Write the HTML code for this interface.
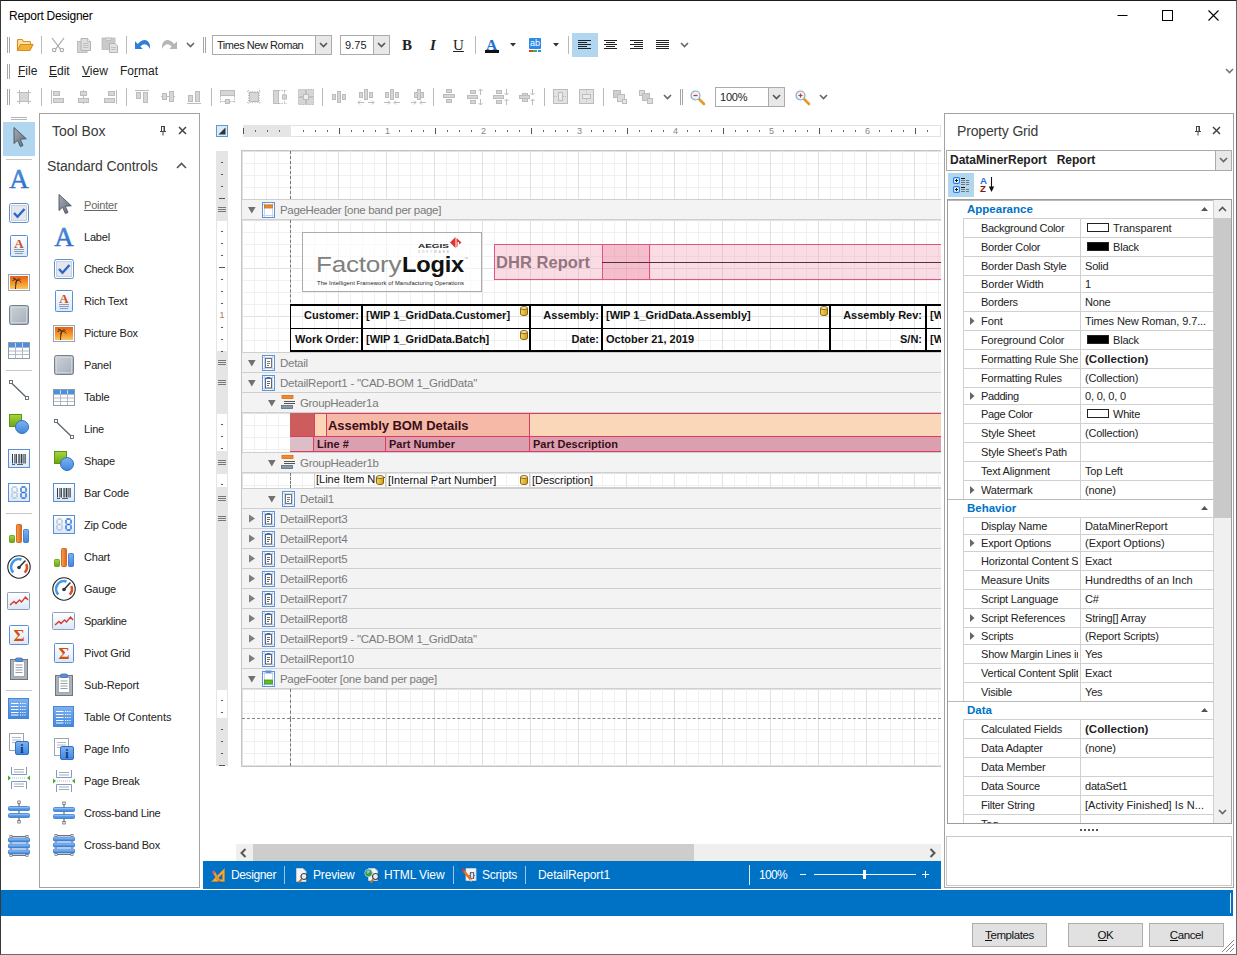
<!DOCTYPE html>
<html><head><meta charset="utf-8"><title>Report Designer</title>
<style>
html,body{margin:0;padding:0;}
body{width:1237px;height:955px;position:relative;overflow:hidden;background:#fff;font-family:"Liberation Sans",sans-serif;font-size:11px;color:#222;}
div,svg,span.a{position:absolute;box-sizing:border-box;white-space:nowrap;}
svg{overflow:visible;}
.bh{background:#f3f3f3;border-top:1px solid #cfcfcf;}
.bt{color:#7a7a7a;}
u{text-decoration:underline;}
.serif{font-family:"Liberation Serif",serif;}
</style></head><body>
<div style="left:0px;top:0px;width:1237px;height:955px;border:1px solid #6b6b6b;border-top-color:#1c1c1c;border-left-color:#3a3a3a;"></div>
<div style="left:9px;top:7px;height:18px;line-height:18px;font-size:12px;color:#000;letter-spacing:-0.258px;">Report Designer</div>
<svg style="left:1117px;top:10px;" width="11" height="11" viewBox="0 0 11 11"><path d="M0.5 5.5H10.5" stroke="#000" stroke-width="1" fill="none"/></svg>
<svg style="left:1162px;top:10px;" width="11" height="11" viewBox="0 0 11 11"><rect x="0.5" y="0.5" width="10" height="10" stroke="#000" stroke-width="1" fill="none"/></svg>
<svg style="left:1208px;top:10px;" width="11" height="11" viewBox="0 0 11 11"><path d="M0.5 0.5L10.5 10.5M10.5 0.5L0.5 10.5" stroke="#000" stroke-width="1.1" fill="none"/></svg>
<div style="left:7px;top:37px;width:1px;height:16px;background:#a5a5a5;"></div>
<div style="left:9px;top:37px;width:1px;height:16px;background:#a5a5a5;"></div>
<svg style="left:16px;top:37px;" width="18" height="16" viewBox="0 0 18 16"><path d="M1.5 13.5V3.5Q1.5 2.5 2.5 2.5H6l1.5 2H13.5Q14.5 4.5 14.5 5.5V7" fill="#fbe3a8" stroke="#d8901c" stroke-width="1.2"/><path d="M1.5 13.5L4.5 7.5H17L13.8 13.5Z" fill="#f3b13a" stroke="#d8901c" stroke-width="1.2" stroke-linejoin="round"/></svg>
<div style="left:41px;top:36px;width:1px;height:18px;background:#b9b9b9;"></div>
<svg style="left:51px;top:37px;" width="14" height="16" viewBox="0 0 14 16"><path d="M1 1L9.300 12M13 1L4.700 12" stroke="#a6a6a6" stroke-width="1.200" fill="none"/><circle cx="3.200" cy="13" r="1.700" fill="#fff" stroke="#a6a6a6" stroke-width="1.100"/><circle cx="10.800" cy="13" r="1.700" fill="#fff" stroke="#a6a6a6" stroke-width="1.100"/></svg>
<svg style="left:76px;top:37px;" width="16" height="16" viewBox="0 0 16 16"><rect x="1.500" y="4.500" width="9.500" height="11" fill="#d4d4d4" stroke="#bdbdbd"/><path d="M5 1.500H11.500L14.500 4.500V13.500H5Z" fill="#dedede" stroke="#b3b3b3"/><path d="M11.500 1.500V4.500H14.500" fill="#eee" stroke="#b3b3b3" stroke-width="0.800"/><path d="M7 6.500H12.500M7 8.500H12.500M7 10.500H12.500" stroke="#bcbcbc" stroke-width="0.900"/></svg>
<svg style="left:101px;top:37px;" width="18" height="16" viewBox="0 0 18 16"><rect x="1" y="1" width="13" height="11.500" fill="#c9c9c9" stroke="#bcbcbc" stroke-width="0.800"/><path d="M4.500 1H10.500V2.500Q10.500 3.500 9.500 3.500H5.500Q4.500 3.500 4.500 2.500Z" fill="#dcdcdc" stroke="#b5b5b5" stroke-width="0.700"/><path d="M8.500 6.500H14L16.500 9V15.500H8.500Z" fill="#e2e2e2" stroke="#b3b3b3"/><path d="M10 10.500H15M10 12.500H15" stroke="#bcbcbc" stroke-width="0.900"/></svg>
<div style="left:126px;top:36px;width:1px;height:18px;background:#b9b9b9;"></div>
<svg style="left:134px;top:38px;" width="18" height="14" viewBox="0 0 18 14"><path d="M1 3.200V11H8.800L6.300 8.600Q9.500 5.400 12.500 6.800Q15 8.200 15.800 11Q16.800 5.500 13.500 3Q9 0.200 3.800 6Z" fill="#2f7fd6"/></svg>
<svg style="left:160px;top:38px;" width="18" height="14" viewBox="0 0 18 14"><path d="M17 3.200V11H9.200L11.700 8.600Q8.500 5.400 5.500 6.800Q3 8.200 2.200 11Q1.200 5.500 4.500 3Q9 0.200 14.200 6Z" fill="#b5b5b5"/></svg>
<svg style="left:186px;top:42px;" width="9" height="6" viewBox="0 0 9 6"><path d="M1 1L4.5 4.5L8 1" stroke="#666" stroke-width="1.6" fill="none"/></svg>
<div style="left:203px;top:37px;width:1px;height:16px;background:#a5a5a5;"></div>
<div style="left:205px;top:37px;width:1px;height:16px;background:#a5a5a5;"></div>
<div style="left:212px;top:35px;width:120px;height:20px;border:1px solid #ababab;background:#fff;"></div>
<div style="left:315px;top:35px;width:17px;height:20px;border:1px solid #ababab;background:#e8e8e8;"></div>
<svg style="left:319px;top:42px;" width="9" height="6" viewBox="0 0 9 6"><path d="M1 1L4.5 4.5L8 1" stroke="#555" stroke-width="1.6" fill="none"/></svg>
<div style="left:217px;top:36px;height:18px;line-height:18px;font-size:11px;color:#222;letter-spacing:-0.461px;">Times New Roman</div>
<div style="left:340px;top:35px;width:50px;height:20px;border:1px solid #ababab;background:#fff;"></div>
<div style="left:373px;top:35px;width:17px;height:20px;border:1px solid #ababab;background:#e8e8e8;"></div>
<svg style="left:377px;top:42px;" width="9" height="6" viewBox="0 0 9 6"><path d="M1 1L4.5 4.5L8 1" stroke="#555" stroke-width="1.6" fill="none"/></svg>
<div style="left:345px;top:36px;height:18px;line-height:18px;font-size:11px;color:#222;letter-spacing:0.098px;">9.75</div>
<div class="serif" style="left:402px;top:35px;height:20px;line-height:20px;font-size:15px;font-weight:bold;color:#222;">B</div>
<div class="serif" style="left:430px;top:35px;height:20px;line-height:20px;font-size:15px;font-style:italic;font-weight:bold;color:#222;">I</div>
<div class="serif" style="left:453px;top:35px;height:20px;line-height:20px;font-size:15px;text-decoration:underline;color:#222;">U</div>
<div style="left:475px;top:36px;width:1px;height:18px;background:#b9b9b9;"></div>
<div class="serif" style="left:486px;top:35px;height:20px;line-height:20px;font-size:15.5px;color:#1f6fd8;font-weight:bold;">A</div>
<div style="left:485px;top:50px;width:14px;height:3px;background:#111;"></div>
<svg style="left:510px;top:43px;" width="7" height="4" viewBox="0 0 7 4"><path d="M0 0H6L3 3.500Z" fill="#333"/></svg>
<div style="left:529px;top:38px;width:12px;height:11px;background:#2b8be6;border-radius:1px;"></div>
<div style="left:530px;top:38px;height:11px;line-height:11px;font-size:9px;color:#fff;">ab</div>
<div style="left:529px;top:50px;width:3.5px;height:2px;background:#e03c31;"></div>
<div style="left:533.3px;top:50px;width:3.5px;height:2px;background:#3db54a;"></div>
<div style="left:537.8px;top:50px;width:3.2px;height:2px;background:#2b8be6;"></div>
<svg style="left:553px;top:43px;" width="7" height="4" viewBox="0 0 7 4"><path d="M0 0H6L3 3.500Z" fill="#333"/></svg>
<div style="left:568px;top:36px;width:1px;height:18px;background:#b9b9b9;"></div>
<div style="left:572px;top:33px;width:26px;height:24px;background:#b1d6f0;"></div>
<svg style="left:578px;top:40px;" width="14" height="10" viewBox="0 0 14 10"><rect x="0" y="0" width="13" height="1" fill="#222"/><rect x="0" y="2" width="9" height="1" fill="#222"/><rect x="0" y="4" width="13" height="1" fill="#222"/><rect x="0" y="6" width="9" height="1" fill="#222"/><rect x="0" y="8" width="13" height="1" fill="#222"/></svg>
<svg style="left:604px;top:40px;" width="14" height="10" viewBox="0 0 14 10"><rect x="0" y="0" width="13" height="1" fill="#222"/><rect x="2" y="2" width="9" height="1" fill="#222"/><rect x="0" y="4" width="13" height="1" fill="#222"/><rect x="2" y="6" width="9" height="1" fill="#222"/><rect x="0" y="8" width="13" height="1" fill="#222"/></svg>
<svg style="left:630px;top:40px;" width="14" height="10" viewBox="0 0 14 10"><rect x="0" y="0" width="13" height="1" fill="#222"/><rect x="4" y="2" width="9" height="1" fill="#222"/><rect x="0" y="4" width="13" height="1" fill="#222"/><rect x="4" y="6" width="9" height="1" fill="#222"/><rect x="0" y="8" width="13" height="1" fill="#222"/></svg>
<svg style="left:656px;top:40px;" width="14" height="10" viewBox="0 0 14 10"><rect x="0" y="0" width="13" height="1" fill="#222"/><rect x="0" y="2" width="13" height="1" fill="#222"/><rect x="0" y="4" width="13" height="1" fill="#222"/><rect x="0" y="6" width="13" height="1" fill="#222"/><rect x="0" y="8" width="13" height="1" fill="#222"/></svg>
<svg style="left:680px;top:42px;" width="9" height="6" viewBox="0 0 9 6"><path d="M1 1L4.5 4.5L8 1" stroke="#666" stroke-width="1.6" fill="none"/></svg>
<div style="left:7px;top:64px;width:1px;height:15px;background:#a5a5a5;"></div>
<div style="left:9px;top:64px;width:1px;height:15px;background:#a5a5a5;"></div>
<div style="left:18px;top:62px;height:18px;line-height:18px;font-size:12px;color:#222;">File</div>
<div style="left:17.5px;top:76px;width:7.8296875px;height:1px;background:#222;"></div>
<div style="left:49px;top:62px;height:18px;line-height:18px;font-size:12px;color:#222;">Edit</div>
<div style="left:48.5px;top:76px;width:8.5046875px;height:1px;background:#222;"></div>
<div style="left:82px;top:62px;height:18px;line-height:18px;font-size:12px;color:#222;">View</div>
<div style="left:81.5px;top:76px;width:8.5046875px;height:1px;background:#222;"></div>
<div style="left:120px;top:62px;height:18px;line-height:18px;font-size:12px;color:#222;">Format</div>
<div style="left:133.503125px;top:76px;width:4.496875px;height:1px;background:#222;"></div>
<svg style="left:1225px;top:68px;" width="9" height="6" viewBox="0 0 9 6"><path d="M1 1L4.5 4.5L8 1" stroke="#777" stroke-width="1.6" fill="none"/></svg>
<div style="left:7px;top:89px;width:1px;height:16px;background:#a5a5a5;"></div>
<div style="left:9px;top:89px;width:1px;height:16px;background:#a5a5a5;"></div>
<svg style="left:16px;top:89px;" width="16" height="16" viewBox="0 0 16 16"><rect x="3.5" y="3.5" width="9" height="9" fill="#d6d6d6" stroke="#bcbcbc"/><path d="M1 3.5H15M1 12.500H15M3.500 1V15M12.500 1V15" stroke="#bcbcbc" stroke-width="1"/></svg>
<div style="left:41px;top:88px;width:1px;height:18px;background:#b9b9b9;"></div>
<svg style="left:50px;top:89px;" width="16" height="16" viewBox="0 0 16 16"><path d="M1.5 1V15" stroke="#bcbcbc"/><rect x="3.5" y="2.5" width="6" height="4" fill="#d6d6d6" stroke="#bcbcbc"/><rect x="3.5" y="9.500" width="10" height="4" fill="#d6d6d6" stroke="#bcbcbc"/></svg>
<svg style="left:76px;top:89px;" width="16" height="16" viewBox="0 0 16 16"><path d="M7.500 1V15" stroke="#bcbcbc"/><rect x="4.5" y="2.5" width="6" height="4" fill="#d6d6d6" stroke="#bcbcbc"/><rect x="2.5" y="9.500" width="10" height="4" fill="#d6d6d6" stroke="#bcbcbc"/></svg>
<svg style="left:102px;top:89px;" width="16" height="16" viewBox="0 0 16 16"><path d="M14.500 1V15" stroke="#bcbcbc"/><rect x="6.500" y="2.5" width="6" height="4" fill="#d6d6d6" stroke="#bcbcbc"/><rect x="2.5" y="9.500" width="10" height="4" fill="#d6d6d6" stroke="#bcbcbc"/></svg>
<div style="left:126px;top:88px;width:1px;height:18px;background:#b9b9b9;"></div>
<svg style="left:134px;top:89px;" width="16" height="16" viewBox="0 0 16 16"><path d="M1 1.500H15" stroke="#bcbcbc"/><rect x="2.5" y="3.5" width="4" height="6" fill="#d6d6d6" stroke="#bcbcbc"/><rect x="9.500" y="3.5" width="4" height="10" fill="#d6d6d6" stroke="#bcbcbc"/></svg>
<svg style="left:160px;top:89px;" width="16" height="16" viewBox="0 0 16 16"><path d="M1 7.500H15" stroke="#bcbcbc"/><rect x="2.5" y="4.5" width="4" height="6" fill="#d6d6d6" stroke="#bcbcbc"/><rect x="9.500" y="2.5" width="4" height="10" fill="#d6d6d6" stroke="#bcbcbc"/></svg>
<svg style="left:186px;top:89px;" width="16" height="16" viewBox="0 0 16 16"><path d="M1 14.500H15" stroke="#bcbcbc"/><rect x="2.5" y="6.500" width="4" height="6" fill="#d6d6d6" stroke="#bcbcbc"/><rect x="9.500" y="2.5" width="4" height="10" fill="#d6d6d6" stroke="#bcbcbc"/></svg>
<div style="left:211px;top:88px;width:1px;height:18px;background:#b9b9b9;"></div>
<svg style="left:220px;top:89px;" width="16" height="16" viewBox="0 0 16 16"><rect x="0.5" y="1.500" width="14" height="5" fill="#d6d6d6" stroke="#bcbcbc"/><rect x="5.500" y="10.500" width="4" height="4" fill="#d6d6d6" stroke="#bcbcbc"/><path d="M0.500 7V14M14.500 7V14M1 12.500H5M10 12.500H14" stroke="#bcbcbc" stroke-dasharray="1.500 1"/></svg>
<svg style="left:246px;top:89px;" width="16" height="16" viewBox="0 0 16 16"><rect x="3.5" y="3.5" width="9" height="9" fill="#d6d6d6" stroke="#bcbcbc"/><path d="M1 2.500H15M1 13.500H15M2.500 1V15M13.500 1V15" stroke="#bcbcbc" stroke-dasharray="1 1.500"/></svg>
<svg style="left:272px;top:89px;" width="16" height="16" viewBox="0 0 16 16"><rect x="1.500" y="1.500" width="5" height="13" fill="#d6d6d6" stroke="#bcbcbc"/><path d="M7 1.500H15M7 14.500H15M12.500 2V14" stroke="#bcbcbc" stroke-dasharray="1.500 1"/><rect x="10.500" y="6" width="4" height="4" fill="#d6d6d6" stroke="#bcbcbc"/></svg>
<svg style="left:298px;top:89px;" width="16" height="16" viewBox="0 0 16 16"><rect x="0.5" y="0.5" width="15" height="15" fill="#d6d6d6" stroke="#bcbcbc" stroke-dasharray="2 1"/><rect x="5.500" y="5.500" width="5" height="5" fill="#eee" stroke="#bcbcbc"/><path d="M8 1V5M8 11V15M1 8H5M11 8H15" stroke="#aaa"/></svg>
<div style="left:322px;top:88px;width:1px;height:18px;background:#b9b9b9;"></div>
<svg style="left:332px;top:89px;" width="16" height="16" viewBox="0 0 16 16"><rect x="0.5" y="5.500" width="3" height="5" fill="#d6d6d6" stroke="#bcbcbc"/><rect x="5.500" y="2.5" width="3" height="11" fill="#d6d6d6" stroke="#bcbcbc"/><rect x="10.500" y="5.500" width="3" height="5" fill="#d6d6d6" stroke="#bcbcbc"/></svg>
<svg style="left:358px;top:89px;" width="16" height="16" viewBox="0 0 16 16"><rect x="1.500" y="3.5" width="3" height="5" fill="#d6d6d6" stroke="#bcbcbc"/><rect x="6.500" y="0.5" width="3" height="10" fill="#d6d6d6" stroke="#bcbcbc"/><rect x="11.500" y="3.5" width="3" height="5" fill="#d6d6d6" stroke="#bcbcbc"/><path d="M0 13.500H6M10 13.500H16M2 11.500L0 13.500L2 15.500M14 11.500L16 13.500L14 15.500" stroke="#bcbcbc" fill="none"/></svg>
<svg style="left:384px;top:89px;" width="16" height="16" viewBox="0 0 16 16"><rect x="1.500" y="3.5" width="3" height="5" fill="#d6d6d6" stroke="#bcbcbc"/><rect x="6.500" y="0.5" width="3" height="10" fill="#d6d6d6" stroke="#bcbcbc"/><rect x="11.500" y="3.5" width="3" height="5" fill="#d6d6d6" stroke="#bcbcbc"/><path d="M0 13.500H6M10 13.500H16M4 11.500L6 13.500L4 15.500M12 11.500L10 13.500L12 15.500" stroke="#bcbcbc" fill="none"/></svg>
<svg style="left:410px;top:89px;" width="16" height="16" viewBox="0 0 16 16"><rect x="4.500" y="3.5" width="3" height="5" fill="#d6d6d6" stroke="#bcbcbc"/><rect x="7.500" y="0.5" width="3" height="10" fill="#d6d6d6" stroke="#bcbcbc"/><rect x="10.500" y="3.5" width="3" height="5" fill="#d6d6d6" stroke="#bcbcbc"/><path d="M1 13.500H6M10 13.500H16M4 11.500L6 13.500L4 15.500M12 11.500L10 13.500L12 15.500" stroke="#bcbcbc" fill="none"/></svg>
<div style="left:433px;top:88px;width:1px;height:18px;background:#b9b9b9;"></div>
<svg style="left:442px;top:89px;" width="16" height="16" viewBox="0 0 16 16"><rect x="4.500" y="0.5" width="5" height="3" fill="#d6d6d6" stroke="#bcbcbc"/><rect x="1.500" y="5.500" width="11" height="3" fill="#d6d6d6" stroke="#bcbcbc"/><rect x="4.500" y="10.500" width="5" height="3" fill="#d6d6d6" stroke="#bcbcbc"/></svg>
<svg style="left:467px;top:89px;" width="16" height="16" viewBox="0 0 16 16"><rect x="3.500" y="1.500" width="5" height="3" fill="#d6d6d6" stroke="#bcbcbc"/><rect x="0.500" y="6.500" width="10" height="3" fill="#d6d6d6" stroke="#bcbcbc"/><rect x="3.500" y="11.500" width="5" height="3" fill="#d6d6d6" stroke="#bcbcbc"/><path d="M13.500 0V6M13.500 10V16M11.500 2L13.500 0L15.500 2M11.500 14L13.500 16L15.500 14" stroke="#bcbcbc" fill="none"/></svg>
<svg style="left:493px;top:89px;" width="16" height="16" viewBox="0 0 16 16"><rect x="3.500" y="1.500" width="5" height="3" fill="#d6d6d6" stroke="#bcbcbc"/><rect x="0.500" y="6.500" width="10" height="3" fill="#d6d6d6" stroke="#bcbcbc"/><rect x="3.500" y="11.500" width="5" height="3" fill="#d6d6d6" stroke="#bcbcbc"/><path d="M13.500 0V6M13.500 10V16M11.500 4L13.500 6L15.500 4M11.500 12L13.500 10L15.500 12" stroke="#bcbcbc" fill="none"/></svg>
<svg style="left:519px;top:89px;" width="16" height="16" viewBox="0 0 16 16"><rect x="3.500" y="4.500" width="5" height="3" fill="#d6d6d6" stroke="#bcbcbc"/><rect x="0.500" y="6.500" width="10" height="3" fill="#d6d6d6" stroke="#bcbcbc"/><rect x="3.500" y="9.500" width="5" height="3" fill="#d6d6d6" stroke="#bcbcbc"/><path d="M13.500 0V6M13.500 10V16M11.500 4L13.500 6L15.500 4M11.500 12L13.500 10L15.500 12" stroke="#bcbcbc" fill="none"/></svg>
<div style="left:544px;top:88px;width:1px;height:18px;background:#b9b9b9;"></div>
<svg style="left:553px;top:89px;" width="16" height="16" viewBox="0 0 16 16"><rect x="0.5" y="0.5" width="14" height="14" fill="#e2e2e2" stroke="#bcbcbc"/><rect x="5.500" y="3.500" width="4" height="8" fill="#ececec" stroke="#bcbcbc"/><path d="M1 7.500H5M10 7.500H14" stroke="#bcbcbc" stroke-dasharray="1 1"/></svg>
<svg style="left:579px;top:89px;" width="16" height="16" viewBox="0 0 16 16"><rect x="0.5" y="0.5" width="14" height="14" fill="#e2e2e2" stroke="#bcbcbc"/><rect x="3.500" y="5.500" width="8" height="4" fill="#ececec" stroke="#bcbcbc"/><path d="M7.500 1V5M7.500 10V14" stroke="#bcbcbc" stroke-dasharray="1 1"/></svg>
<div style="left:603px;top:88px;width:1px;height:18px;background:#b9b9b9;"></div>
<svg style="left:612px;top:89px;" width="16" height="16" viewBox="0 0 16 16"><rect x="1.500" y="1.500" width="7" height="7" fill="#cfcfcf" stroke="#bcbcbc"/><rect x="5.500" y="5.500" width="7" height="7" fill="#dcdcdc" stroke="#bcbcbc"/><rect x="10.500" y="10.500" width="4" height="4" fill="#e6e6e6" stroke="#bcbcbc"/></svg>
<svg style="left:638px;top:89px;" width="16" height="16" viewBox="0 0 16 16"><rect x="1.500" y="1.500" width="5" height="5" fill="#dcdcdc" stroke="#bcbcbc"/><rect x="4.500" y="4.500" width="7" height="7" fill="#cfcfcf" stroke="#bcbcbc"/><rect x="9.500" y="9.500" width="5" height="5" fill="#dcdcdc" stroke="#bcbcbc"/></svg>
<svg style="left:663px;top:94px;" width="9" height="6" viewBox="0 0 9 6"><path d="M1 1L4.5 4.5L8 1" stroke="#666" stroke-width="1.6" fill="none"/></svg>
<div style="left:680px;top:89px;width:1px;height:16px;background:#a5a5a5;"></div>
<div style="left:682px;top:89px;width:1px;height:16px;background:#a5a5a5;"></div>
<svg style="left:690px;top:90px;" width="16" height="16" viewBox="0 0 16 16"><path d="M9 9L14 14" stroke="#e39a2d" stroke-width="2.600" stroke-linecap="round"/><circle cx="5.500" cy="5.500" r="4.500" fill="#eaf3fb" stroke="#8ea6bd" stroke-width="1.200"/><path d="M3.500 5.500H7.500" stroke="#c0392b" stroke-width="1.200"/></svg>
<div style="left:715px;top:87px;width:70px;height:20px;border:1px solid #ababab;background:#fff;"></div>
<div style="left:768px;top:87px;width:17px;height:20px;border:1px solid #ababab;background:#e8e8e8;"></div>
<svg style="left:772px;top:94px;" width="9" height="6" viewBox="0 0 9 6"><path d="M1 1L4.5 4.5L8 1" stroke="#555" stroke-width="1.6" fill="none"/></svg>
<div style="left:720px;top:88px;height:18px;line-height:18px;font-size:11px;color:#222;letter-spacing:-0.208px;">100%</div>
<svg style="left:795px;top:90px;" width="16" height="16" viewBox="0 0 16 16"><path d="M9 9L14 14" stroke="#e39a2d" stroke-width="2.600" stroke-linecap="round"/><circle cx="5.500" cy="5.500" r="4.500" fill="#eaf3fb" stroke="#8ea6bd" stroke-width="1.200"/><path d="M3.500 5.500H7.500M5.500 3.500V7.500" stroke="#c0392b" stroke-width="1.200"/></svg>
<svg style="left:819px;top:94px;" width="9" height="6" viewBox="0 0 9 6"><path d="M1 1L4.5 4.5L8 1" stroke="#666" stroke-width="1.6" fill="none"/></svg>
<svg width="0" height="0" style="left:0;top:0"><defs>
<linearGradient id="gA" x1="0" y1="0" x2="0" y2="1"><stop offset="0" stop-color="#5a9be8"/><stop offset="1" stop-color="#1f5fbf"/></linearGradient>
<linearGradient id="gP" x1="0" y1="0" x2="1" y2="1"><stop offset="0" stop-color="#a3acb6"/><stop offset="1" stop-color="#646d77"/></linearGradient>
<linearGradient id="gW" x1="0" y1="0" x2="0" y2="1"><stop offset="0" stop-color="#ffffff"/><stop offset="1" stop-color="#dbe8f8"/></linearGradient>
<linearGradient id="gG" x1="0" y1="0" x2="1" y2="1"><stop offset="0" stop-color="#cdd3da"/><stop offset="1" stop-color="#a4adb7"/></linearGradient>
<linearGradient id="gO" x1="0" y1="0" x2="0" y2="1"><stop offset="0" stop-color="#e8601a"/><stop offset="0.7" stop-color="#f7a531"/><stop offset="1" stop-color="#f6c56a"/></linearGradient>
<linearGradient id="gB" x1="0" y1="0" x2="0" y2="1"><stop offset="0" stop-color="#7fb2f0"/><stop offset="1" stop-color="#3f86dd"/></linearGradient>
<linearGradient id="gGr" x1="0" y1="0" x2="0" y2="1"><stop offset="0" stop-color="#a5d63f"/><stop offset="1" stop-color="#6aa512"/></linearGradient>
<linearGradient id="gOr" x1="0" y1="0" x2="1" y2="0"><stop offset="0" stop-color="#f7a04a"/><stop offset="1" stop-color="#e0661a"/></linearGradient>
<linearGradient id="gCy" x1="0" y1="0" x2="1" y2="0"><stop offset="0" stop-color="#f7d566"/><stop offset="1" stop-color="#d99a12"/></linearGradient>
<linearGradient id="gB2" x1="0" y1="0" x2="0" y2="1"><stop offset="0" stop-color="#b4d4f8"/><stop offset="0.5" stop-color="#5f9fe8"/><stop offset="1" stop-color="#3a7fd8"/></linearGradient>
</defs></svg>
<div style="left:11px;top:117px;width:16px;height:1px;background:#b5b5b5;"></div>
<div style="left:11px;top:119px;width:16px;height:1px;background:#b5b5b5;"></div>
<div style="left:3px;top:122px;width:32px;height:34px;background:#b1d6f0;"></div>
<svg style="left:7px;top:126px;" width="24" height="24" viewBox="0 0 24 24"><path d="M7 1.500V17.500L10.600 14.200L13.400 20.600L16 19.400L13.200 13.200L19.300 12.800Z" fill="url(#gP)" stroke="#4a525b" stroke-width="0.900" stroke-linejoin="round"/></svg>
<svg style="left:7px;top:167px;" width="24" height="24" viewBox="0 0 24 24"><text x="12" y="20.700" text-anchor="middle" font-family="Liberation Serif,serif" font-size="27" fill="url(#gA)" stroke="#3a7ad4" stroke-width="0.500">A</text></svg>
<svg style="left:7px;top:201px;" width="24" height="24" viewBox="0 0 24 24"><rect x="2.500" y="2.500" width="19" height="19" rx="2" fill="#fff" stroke="#5b8ed6"/><rect x="4.500" y="4.500" width="15" height="15" fill="#e4e8ee" stroke="#c9d0d9"/><path d="M7 12L10.500 15.800L17.500 8" fill="none" stroke="#2a68c8" stroke-width="2.400"/></svg>
<svg style="left:7px;top:234px;" width="24" height="24" viewBox="0 0 24 24"><rect x="3.500" y="1.500" width="17" height="21" rx="1" fill="url(#gW)" stroke="#5b8ed6"/><text x="12" y="13.500" text-anchor="middle" font-family="Liberation Serif,serif" font-weight="bold" font-size="13" fill="#c8501a">A</text><path d="M7 15.500H17M7 17.500H17M8 19.500H16" stroke="#7d93ad" stroke-width="0.900"/></svg>
<svg style="left:7px;top:270px;" width="24" height="24" viewBox="0 0 24 24"><rect x="1.500" y="4.500" width="21" height="16" fill="#fff" stroke="#9aa5b1"/><rect x="3" y="6" width="18" height="13" fill="url(#gO)"/><path d="M8.500 19C8.500 15 9 12.500 10 10.500" stroke="#3b2a14" stroke-width="1" fill="none"/><path d="M10 10.500C8 9 6.500 9.500 5.500 11M10 10.500C8.500 8.500 7 8 6 8.500M10 10.500C11 8.500 12.500 8.500 13.500 9.500M10 10.500C12 10 13.500 11 14 12.500M10 10.500C9 11.500 8.500 12.500 8.700 13.500" stroke="#3b2a14" stroke-width="1" fill="none"/></svg>
<svg style="left:7px;top:303px;" width="24" height="24" viewBox="0 0 24 24"><rect x="2.500" y="2.500" width="19" height="19" rx="2" fill="url(#gG)" stroke="#76818c"/><rect x="4.500" y="4.500" width="15" height="15" fill="none" stroke="#d3d8de" stroke-opacity="0.800"/></svg>
<svg style="left:7px;top:338px;" width="24" height="24" viewBox="0 0 24 24"><rect x="1.500" y="4.500" width="21" height="16" fill="#fff" stroke="#8f9bab"/><rect x="2" y="5" width="20" height="4" fill="#4a8fe2"/><path d="M2 9.500H22M2 13H22M2 16.500H22M8.500 5V20M15.500 5V20" stroke="#a9b3c0" stroke-width="0.900"/><path d="M8.500 5V9M15.500 5V9" stroke="#cfe0f6" stroke-width="0.900"/></svg>
<svg style="left:7px;top:378px;" width="24" height="24" viewBox="0 0 24 24"><path d="M4 4.500L20 20" stroke="#5a6470" stroke-width="1.300"/><rect x="2.500" y="2.500" width="3" height="3" fill="#fff" stroke="#5a6470" stroke-width="0.900"/><rect x="18.500" y="18.500" width="3" height="3" fill="#fff" stroke="#5a6470" stroke-width="0.900"/></svg>
<svg style="left:7px;top:412px;" width="24" height="24" viewBox="0 0 24 24"><rect x="2.500" y="2.500" width="12" height="12" fill="url(#gGr)" stroke="#5f9410"/><circle cx="15" cy="15" r="6.500" fill="url(#gB)" stroke="#2f6fc4"/></svg>
<svg style="left:7px;top:447px;" width="24" height="24" viewBox="0 0 24 24"><rect x="1.500" y="2.500" width="21" height="18" fill="url(#gW)" stroke="#5b8ed6"/><rect x="5" y="7" width="1" height="9.500" fill="#333a44"/><rect x="7" y="7" width="0.6" height="9.500" fill="#333a44"/><rect x="8.5" y="7" width="1.4" height="9.500" fill="#333a44"/><rect x="11" y="7" width="0.6" height="9.500" fill="#333a44"/><rect x="12.3" y="7" width="1" height="9.500" fill="#333a44"/><rect x="14" y="7" width="1.4" height="9.500" fill="#333a44"/><rect x="16.2" y="7" width="0.6" height="9.500" fill="#333a44"/><rect x="17.5" y="7" width="1.2" height="9.500" fill="#333a44"/><path d="M5 17.500H8M10 17.500H16" stroke="#333a44" stroke-width="0.800"/></svg>
<svg style="left:7px;top:481px;" width="24" height="24" viewBox="0 0 24 24"><rect x="1.500" y="2.500" width="21" height="18" fill="url(#gW)" stroke="#5b8ed6"/><path d="M5.5 6H9.5M5.5 11.500H9.5M5.5 17H9.5" stroke="#b5c4d8" stroke-width="1.400"/><path d="M5.0 6.800V10.700M5.0 12.300V16.200M10.0 6.800V10.700M10.0 12.300V16.200" stroke="#b5c4d8" stroke-width="1.400"/><path d="M14.5 6H18.5M14.5 11.500H18.5M14.5 17H18.5" stroke="#2a6fd6" stroke-width="1.400"/><path d="M14.0 6.800V10.700M14.0 12.300V16.200M19.0 6.800V10.700M19.0 12.300V16.200" stroke="#2a6fd6" stroke-width="1.400"/></svg>
<svg style="left:7px;top:521px;" width="24" height="24" viewBox="0 0 24 24"><rect x="2.500" y="14.500" width="5" height="7" rx="0.800" fill="url(#gGr)" stroke="#5f9410" stroke-width="0.800"/><rect x="9.500" y="3.500" width="5" height="18" rx="0.800" fill="url(#gOr)" stroke="#c85a12" stroke-width="0.800"/><rect x="16.500" y="8.500" width="5" height="13" rx="0.800" fill="url(#gB)" stroke="#2f6fc4" stroke-width="0.800"/></svg>
<svg style="left:7px;top:555px;" width="24" height="24" viewBox="0 0 24 24"><circle cx="12" cy="12" r="11.200" fill="#fff" stroke="#222" stroke-width="1.100"/><path d="M6.300 17.500A8 8 0 0 1 14.500 4.400" fill="none" stroke="#3d9bea" stroke-width="2.600"/><path d="M19.300 9A8 8 0 0 1 17.700 17.600" fill="none" stroke="#d9532a" stroke-width="2.600"/><path d="M12 12.500L18 6" stroke="#333" stroke-width="1.600" stroke-linecap="round"/><circle cx="12" cy="12.500" r="1.800" fill="#333"/></svg>
<svg style="left:7px;top:589px;" width="24" height="24" viewBox="0 0 24 24"><rect x="0.500" y="3.500" width="22" height="17" rx="1" fill="url(#gW)" stroke="#8fa0b8"/><path d="M3 16L7 12.500L9 14.500L12.500 11L14.500 13L18.500 8L21 11" fill="none" stroke="#d63b2f" stroke-width="1.400"/></svg>
<svg style="left:7px;top:623px;" width="24" height="24" viewBox="0 0 24 24"><rect x="2.500" y="2.500" width="19" height="19" rx="1" fill="url(#gW)" stroke="#5b8ed6"/><text x="12" y="17.800" text-anchor="middle" font-family="Liberation Serif,serif" font-weight="bold" font-size="17" fill="#d4500f">Σ</text></svg>
<svg style="left:7px;top:657px;" width="24" height="24" viewBox="0 0 24 24"><rect x="3.500" y="2.500" width="17" height="20" fill="#aab2bc" stroke="#6d7782"/><rect x="6.500" y="4.500" width="11" height="15" fill="#fff" stroke="#8a949f" stroke-width="0.700"/><rect x="8.500" y="1" width="7" height="3.500" rx="1.200" fill="#5b8ed6" stroke="#3c6db5" stroke-width="0.700"/><path d="M8.500 8H15.500M8.500 10.500H15.500M8.500 13H15.500M8.500 15.500H15.500" stroke="#8a949f" stroke-width="0.900"/></svg>
<svg style="left:7px;top:697px;" width="24" height="24" viewBox="0 0 24 24"><rect x="1.500" y="1.500" width="20" height="20" fill="url(#gB)" stroke="#4a86d8"/><path d="M4 6.500H11.500M4 9.500H11.500M4 12.500H11.500M4 15.500H11.500M4 18H11.500" stroke="#fff" stroke-width="1.200"/><path d="M13 6.500H19M13 9.500H19M13 12.500H19M13 15.500H19M13 18H19" stroke="#fff" stroke-width="1.200" stroke-dasharray="1 0.800"/></svg>
<svg style="left:7px;top:732px;" width="24" height="24" viewBox="0 0 24 24"><rect x="2.500" y="1.500" width="14" height="17" fill="#fff" stroke="#9aa5b1"/><path d="M5 5.500H14M5 8H14M5 10.500H10" stroke="#aab4c0" stroke-width="0.900"/><rect x="8.500" y="9.500" width="13" height="13" rx="1.500" fill="url(#gB)" stroke="#2f6fc4"/><text x="15" y="20.500" text-anchor="middle" font-family="Liberation Serif,serif" font-weight="bold" font-size="12" fill="#10357a">i</text></svg>
<svg style="left:7px;top:766px;" width="24" height="24" viewBox="0 0 24 24"><path d="M4.500 1V8.500H19.500V1" fill="#fff" stroke="#7d9cc8"/><path d="M7 3.500H17M7 6H17" stroke="#9aa5b1" stroke-width="0.900"/><path d="M4.500 23V15.500H19.500V23" fill="#fff" stroke="#7d9cc8"/><path d="M7 18H17M7 20.500H17" stroke="#9aa5b1" stroke-width="0.900"/><path d="M1 9.500L4 12L1 14.500Z M23 9.500L20 12L23 14.500Z" fill="#4caf2a"/><path d="M5 12H19" stroke="#9aa5b1" stroke-dasharray="1 1" stroke-width="0.800"/></svg>
<svg style="left:7px;top:800px;" width="24" height="24" viewBox="0 0 24 24"><path d="M12 3V21" stroke="#555" stroke-width="1"/><rect x="1.500" y="6.500" width="21" height="4" rx="1" fill="url(#gB2)" stroke="#3a78cf" stroke-width="0.800"/><rect x="1.500" y="13.500" width="21" height="4" rx="1" fill="url(#gB2)" stroke="#3a78cf" stroke-width="0.800"/><rect x="10.800" y="1" width="2.400" height="2.400" fill="#fff" stroke="#555" stroke-width="0.700"/><rect x="10.800" y="20.600" width="2.400" height="2.400" fill="#fff" stroke="#555" stroke-width="0.700"/></svg>
<svg style="left:7px;top:834px;" width="24" height="24" viewBox="0 0 24 24"><rect x="4" y="2.500" width="16" height="19" fill="none" stroke="#666" stroke-width="0.900"/><rect x="1.500" y="4" width="21" height="4" rx="1" fill="url(#gB2)" stroke="#3a78cf" stroke-width="0.800"/><rect x="1.500" y="10" width="21" height="4" rx="1" fill="url(#gB2)" stroke="#3a78cf" stroke-width="0.800"/><rect x="1.500" y="16" width="21" height="4" rx="1" fill="url(#gB2)" stroke="#3a78cf" stroke-width="0.800"/><rect x="2.900" y="1.400" width="2.200" height="2.200" fill="#fff" stroke="#555" stroke-width="0.600"/><rect x="18.900" y="1.400" width="2.200" height="2.200" fill="#fff" stroke="#555" stroke-width="0.600"/><rect x="2.900" y="20.400" width="2.200" height="2.200" fill="#fff" stroke="#555" stroke-width="0.600"/><rect x="18.900" y="20.400" width="2.200" height="2.200" fill="#fff" stroke="#555" stroke-width="0.600"/></svg>
<div style="left:6px;top:159px;width:26px;height:1px;background:#c6c6c6;"></div>
<div style="left:6px;top:370px;width:26px;height:1px;background:#c6c6c6;"></div>
<div style="left:6px;top:513px;width:26px;height:1px;background:#c6c6c6;"></div>
<div style="left:6px;top:690px;width:26px;height:1px;background:#c6c6c6;"></div>
<div style="left:39px;top:113px;width:161px;height:775px;border:1px solid #a3a3a3;background:#fff;"></div>
<div style="left:52px;top:121px;height:20px;line-height:20px;font-size:14px;color:#3a3a3a;letter-spacing:-0.037px;">Tool Box</div>
<svg style="left:159px;top:126px;" width="8" height="10" viewBox="0 0 8 10"><path d="M2 0.500H6M2.500 0.500V5M5.500 0.500V5M5 0.500V5M1 5.500H7M4 5.500V9.500" stroke="#444" stroke-width="1" fill="none"/></svg>
<svg style="left:178px;top:126px;" width="9" height="9" viewBox="0 0 9 9"><path d="M1 1L8 8M8 1L1 8" stroke="#444" stroke-width="1.500"/></svg>
<div style="left:47px;top:156px;height:20px;line-height:20px;font-size:14px;color:#3a3a3a;letter-spacing:-0.138px;">Standard Controls</div>
<svg style="left:176px;top:162px;" width="11" height="7" viewBox="0 0 11 7"><path d="M1 6L5.500 1.500L10 6" stroke="#555" stroke-width="1.600" fill="none"/></svg>
<svg style="left:52px;top:193px;" width="24" height="24" viewBox="0 0 24 24"><path d="M7 1.500V17.500L10.600 14.200L13.400 20.600L16 19.400L13.200 13.200L19.300 12.800Z" fill="url(#gP)" stroke="#4a525b" stroke-width="0.900" stroke-linejoin="round"/></svg>
<div style="left:84px;top:197px;height:16px;line-height:16px;font-size:11px;color:#666;text-decoration:underline;letter-spacing:-0.2px;">Pointer</div>
<svg style="left:52px;top:225px;" width="24" height="24" viewBox="0 0 24 24"><text x="12" y="20.700" text-anchor="middle" font-family="Liberation Serif,serif" font-size="27" fill="url(#gA)" stroke="#3a7ad4" stroke-width="0.500">A</text></svg>
<div style="left:84px;top:229px;height:16px;line-height:16px;font-size:11px;color:#222;letter-spacing:-0.2px;">Label</div>
<svg style="left:52px;top:257px;" width="24" height="24" viewBox="0 0 24 24"><rect x="2.500" y="2.500" width="19" height="19" rx="2" fill="#fff" stroke="#5b8ed6"/><rect x="4.500" y="4.500" width="15" height="15" fill="#e4e8ee" stroke="#c9d0d9"/><path d="M7 12L10.500 15.800L17.500 8" fill="none" stroke="#2a68c8" stroke-width="2.400"/></svg>
<div style="left:84px;top:261px;height:16px;line-height:16px;font-size:11px;color:#222;letter-spacing:-0.399px;">Check Box</div>
<svg style="left:52px;top:289px;" width="24" height="24" viewBox="0 0 24 24"><rect x="3.500" y="1.500" width="17" height="21" rx="1" fill="url(#gW)" stroke="#5b8ed6"/><text x="12" y="13.500" text-anchor="middle" font-family="Liberation Serif,serif" font-weight="bold" font-size="13" fill="#c8501a">A</text><path d="M7 15.500H17M7 17.500H17M8 19.500H16" stroke="#7d93ad" stroke-width="0.900"/></svg>
<div style="left:84px;top:293px;height:16px;line-height:16px;font-size:11px;color:#222;letter-spacing:-0.2px;">Rich Text</div>
<svg style="left:52px;top:321px;" width="24" height="24" viewBox="0 0 24 24"><rect x="1.500" y="4.500" width="21" height="16" fill="#fff" stroke="#9aa5b1"/><rect x="3" y="6" width="18" height="13" fill="url(#gO)"/><path d="M8.500 19C8.500 15 9 12.500 10 10.500" stroke="#3b2a14" stroke-width="1" fill="none"/><path d="M10 10.500C8 9 6.500 9.500 5.500 11M10 10.500C8.500 8.500 7 8 6 8.500M10 10.500C11 8.500 12.500 8.500 13.500 9.500M10 10.500C12 10 13.500 11 14 12.500M10 10.500C9 11.500 8.500 12.500 8.700 13.500" stroke="#3b2a14" stroke-width="1" fill="none"/></svg>
<div style="left:84px;top:325px;height:16px;line-height:16px;font-size:11px;color:#222;letter-spacing:-0.222px;">Picture Box</div>
<svg style="left:52px;top:353px;" width="24" height="24" viewBox="0 0 24 24"><rect x="2.500" y="2.500" width="19" height="19" rx="2" fill="url(#gG)" stroke="#76818c"/><rect x="4.500" y="4.500" width="15" height="15" fill="none" stroke="#d3d8de" stroke-opacity="0.800"/></svg>
<div style="left:84px;top:357px;height:16px;line-height:16px;font-size:11px;color:#222;letter-spacing:-0.2px;">Panel</div>
<svg style="left:52px;top:385px;" width="24" height="24" viewBox="0 0 24 24"><rect x="1.500" y="4.500" width="21" height="16" fill="#fff" stroke="#8f9bab"/><rect x="2" y="5" width="20" height="4" fill="#4a8fe2"/><path d="M2 9.500H22M2 13H22M2 16.500H22M8.500 5V20M15.500 5V20" stroke="#a9b3c0" stroke-width="0.900"/><path d="M8.500 5V9M15.500 5V9" stroke="#cfe0f6" stroke-width="0.900"/></svg>
<div style="left:84px;top:389px;height:16px;line-height:16px;font-size:11px;color:#222;letter-spacing:-0.2px;">Table</div>
<svg style="left:52px;top:417px;" width="24" height="24" viewBox="0 0 24 24"><path d="M4 4.500L20 20" stroke="#5a6470" stroke-width="1.300"/><rect x="2.500" y="2.500" width="3" height="3" fill="#fff" stroke="#5a6470" stroke-width="0.900"/><rect x="18.500" y="18.500" width="3" height="3" fill="#fff" stroke="#5a6470" stroke-width="0.900"/></svg>
<div style="left:84px;top:421px;height:16px;line-height:16px;font-size:11px;color:#222;letter-spacing:-0.2px;">Line</div>
<svg style="left:52px;top:449px;" width="24" height="24" viewBox="0 0 24 24"><rect x="2.500" y="2.500" width="12" height="12" fill="url(#gGr)" stroke="#5f9410"/><circle cx="15" cy="15" r="6.500" fill="url(#gB)" stroke="#2f6fc4"/></svg>
<div style="left:84px;top:453px;height:16px;line-height:16px;font-size:11px;color:#222;letter-spacing:-0.2px;">Shape</div>
<svg style="left:52px;top:481px;" width="24" height="24" viewBox="0 0 24 24"><rect x="1.500" y="2.500" width="21" height="18" fill="url(#gW)" stroke="#5b8ed6"/><rect x="5" y="7" width="1" height="9.500" fill="#333a44"/><rect x="7" y="7" width="0.6" height="9.500" fill="#333a44"/><rect x="8.5" y="7" width="1.4" height="9.500" fill="#333a44"/><rect x="11" y="7" width="0.6" height="9.500" fill="#333a44"/><rect x="12.3" y="7" width="1" height="9.500" fill="#333a44"/><rect x="14" y="7" width="1.4" height="9.500" fill="#333a44"/><rect x="16.2" y="7" width="0.6" height="9.500" fill="#333a44"/><rect x="17.5" y="7" width="1.2" height="9.500" fill="#333a44"/><path d="M5 17.500H8M10 17.500H16" stroke="#333a44" stroke-width="0.800"/></svg>
<div style="left:84px;top:485px;height:16px;line-height:16px;font-size:11px;color:#222;letter-spacing:-0.2px;">Bar Code</div>
<svg style="left:52px;top:513px;" width="24" height="24" viewBox="0 0 24 24"><rect x="1.500" y="2.500" width="21" height="18" fill="url(#gW)" stroke="#5b8ed6"/><path d="M5.5 6H9.5M5.5 11.500H9.5M5.5 17H9.5" stroke="#b5c4d8" stroke-width="1.400"/><path d="M5.0 6.800V10.700M5.0 12.300V16.200M10.0 6.800V10.700M10.0 12.300V16.200" stroke="#b5c4d8" stroke-width="1.400"/><path d="M14.5 6H18.5M14.5 11.500H18.5M14.5 17H18.5" stroke="#2a6fd6" stroke-width="1.400"/><path d="M14.0 6.800V10.700M14.0 12.300V16.200M19.0 6.800V10.700M19.0 12.300V16.200" stroke="#2a6fd6" stroke-width="1.400"/></svg>
<div style="left:84px;top:517px;height:16px;line-height:16px;font-size:11px;color:#222;letter-spacing:-0.2px;">Zip Code</div>
<svg style="left:52px;top:545px;" width="24" height="24" viewBox="0 0 24 24"><rect x="2.500" y="14.500" width="5" height="7" rx="0.800" fill="url(#gGr)" stroke="#5f9410" stroke-width="0.800"/><rect x="9.500" y="3.500" width="5" height="18" rx="0.800" fill="url(#gOr)" stroke="#c85a12" stroke-width="0.800"/><rect x="16.500" y="8.500" width="5" height="13" rx="0.800" fill="url(#gB)" stroke="#2f6fc4" stroke-width="0.800"/></svg>
<div style="left:84px;top:549px;height:16px;line-height:16px;font-size:11px;color:#222;letter-spacing:-0.2px;">Chart</div>
<svg style="left:52px;top:577px;" width="24" height="24" viewBox="0 0 24 24"><circle cx="12" cy="12" r="11.200" fill="#fff" stroke="#222" stroke-width="1.100"/><path d="M6.300 17.500A8 8 0 0 1 14.500 4.400" fill="none" stroke="#3d9bea" stroke-width="2.600"/><path d="M19.300 9A8 8 0 0 1 17.700 17.600" fill="none" stroke="#d9532a" stroke-width="2.600"/><path d="M12 12.500L18 6" stroke="#333" stroke-width="1.600" stroke-linecap="round"/><circle cx="12" cy="12.500" r="1.800" fill="#333"/></svg>
<div style="left:84px;top:581px;height:16px;line-height:16px;font-size:11px;color:#222;letter-spacing:-0.2px;">Gauge</div>
<svg style="left:52px;top:609px;" width="24" height="24" viewBox="0 0 24 24"><rect x="0.500" y="3.500" width="22" height="17" rx="1" fill="url(#gW)" stroke="#8fa0b8"/><path d="M3 16L7 12.500L9 14.500L12.500 11L14.500 13L18.500 8L21 11" fill="none" stroke="#d63b2f" stroke-width="1.400"/></svg>
<div style="left:84px;top:613px;height:16px;line-height:16px;font-size:11px;color:#222;letter-spacing:-0.373px;">Sparkline</div>
<svg style="left:52px;top:641px;" width="24" height="24" viewBox="0 0 24 24"><rect x="2.500" y="2.500" width="19" height="19" rx="1" fill="url(#gW)" stroke="#5b8ed6"/><text x="12" y="17.800" text-anchor="middle" font-family="Liberation Serif,serif" font-weight="bold" font-size="17" fill="#d4500f">Σ</text></svg>
<div style="left:84px;top:645px;height:16px;line-height:16px;font-size:11px;color:#222;letter-spacing:-0.2px;">Pivot Grid</div>
<svg style="left:52px;top:673px;" width="24" height="24" viewBox="0 0 24 24"><rect x="3.500" y="2.500" width="17" height="20" fill="#aab2bc" stroke="#6d7782"/><rect x="6.500" y="4.500" width="11" height="15" fill="#fff" stroke="#8a949f" stroke-width="0.700"/><rect x="8.500" y="1" width="7" height="3.500" rx="1.200" fill="#5b8ed6" stroke="#3c6db5" stroke-width="0.700"/><path d="M8.500 8H15.500M8.500 10.500H15.500M8.500 13H15.500M8.500 15.500H15.500" stroke="#8a949f" stroke-width="0.900"/></svg>
<div style="left:84px;top:677px;height:16px;line-height:16px;font-size:11px;color:#222;letter-spacing:-0.125px;">Sub-Report</div>
<svg style="left:52px;top:705px;" width="24" height="24" viewBox="0 0 24 24"><rect x="1.500" y="1.500" width="20" height="20" fill="url(#gB)" stroke="#4a86d8"/><path d="M4 6.500H11.500M4 9.500H11.500M4 12.500H11.500M4 15.500H11.500M4 18H11.500" stroke="#fff" stroke-width="1.200"/><path d="M13 6.500H19M13 9.500H19M13 12.500H19M13 15.500H19M13 18H19" stroke="#fff" stroke-width="1.200" stroke-dasharray="1 0.800"/></svg>
<div style="left:84px;top:709px;height:16px;line-height:16px;font-size:11px;color:#222;letter-spacing:-0.038px;">Table Of Contents</div>
<svg style="left:52px;top:737px;" width="24" height="24" viewBox="0 0 24 24"><rect x="2.500" y="1.500" width="14" height="17" fill="#fff" stroke="#9aa5b1"/><path d="M5 5.500H14M5 8H14M5 10.500H10" stroke="#aab4c0" stroke-width="0.900"/><rect x="8.500" y="9.500" width="13" height="13" rx="1.500" fill="url(#gB)" stroke="#2f6fc4"/><text x="15" y="20.500" text-anchor="middle" font-family="Liberation Serif,serif" font-weight="bold" font-size="12" fill="#10357a">i</text></svg>
<div style="left:84px;top:741px;height:16px;line-height:16px;font-size:11px;color:#222;letter-spacing:-0.2px;">Page Info</div>
<svg style="left:52px;top:769px;" width="24" height="24" viewBox="0 0 24 24"><path d="M4.500 1V8.500H19.500V1" fill="#fff" stroke="#7d9cc8"/><path d="M7 3.500H17M7 6H17" stroke="#9aa5b1" stroke-width="0.900"/><path d="M4.500 23V15.500H19.500V23" fill="#fff" stroke="#7d9cc8"/><path d="M7 18H17M7 20.500H17" stroke="#9aa5b1" stroke-width="0.900"/><path d="M1 9.500L4 12L1 14.500Z M23 9.500L20 12L23 14.500Z" fill="#4caf2a"/><path d="M5 12H19" stroke="#9aa5b1" stroke-dasharray="1 1" stroke-width="0.800"/></svg>
<div style="left:84px;top:773px;height:16px;line-height:16px;font-size:11px;color:#222;letter-spacing:-0.2px;">Page Break</div>
<svg style="left:52px;top:801px;" width="24" height="24" viewBox="0 0 24 24"><path d="M12 3V21" stroke="#555" stroke-width="1"/><rect x="1.500" y="6.500" width="21" height="4" rx="1" fill="url(#gB2)" stroke="#3a78cf" stroke-width="0.800"/><rect x="1.500" y="13.500" width="21" height="4" rx="1" fill="url(#gB2)" stroke="#3a78cf" stroke-width="0.800"/><rect x="10.800" y="1" width="2.400" height="2.400" fill="#fff" stroke="#555" stroke-width="0.700"/><rect x="10.800" y="20.600" width="2.400" height="2.400" fill="#fff" stroke="#555" stroke-width="0.700"/></svg>
<div style="left:84px;top:805px;height:16px;line-height:16px;font-size:11px;color:#222;letter-spacing:-0.294px;">Cross-band Line</div>
<svg style="left:52px;top:833px;" width="24" height="24" viewBox="0 0 24 24"><rect x="4" y="2.500" width="16" height="19" fill="none" stroke="#666" stroke-width="0.900"/><rect x="1.500" y="4" width="21" height="4" rx="1" fill="url(#gB2)" stroke="#3a78cf" stroke-width="0.800"/><rect x="1.500" y="10" width="21" height="4" rx="1" fill="url(#gB2)" stroke="#3a78cf" stroke-width="0.800"/><rect x="1.500" y="16" width="21" height="4" rx="1" fill="url(#gB2)" stroke="#3a78cf" stroke-width="0.800"/><rect x="2.900" y="1.400" width="2.200" height="2.200" fill="#fff" stroke="#555" stroke-width="0.600"/><rect x="18.900" y="1.400" width="2.200" height="2.200" fill="#fff" stroke="#555" stroke-width="0.600"/><rect x="2.900" y="20.400" width="2.200" height="2.200" fill="#fff" stroke="#555" stroke-width="0.600"/><rect x="18.900" y="20.400" width="2.200" height="2.200" fill="#fff" stroke="#555" stroke-width="0.600"/></svg>
<div style="left:84px;top:837px;height:16px;line-height:16px;font-size:11px;color:#222;letter-spacing:-0.2px;">Cross-band Box</div>
<div style="left:216px;top:125px;width:12px;height:12px;border:1px solid #5b9bd5;background:#dcebf9;"></div>
<svg style="left:218px;top:127px;" width="8" height="8" viewBox="0 0 8 8"><path d="M7.500 0.500V7.500H0.500Z" fill="#333"/></svg>
<div style="left:243px;top:125px;width:698px;height:12px;background:#fff;border:1px solid #e2e2e2;"></div>
<div style="left:243px;top:125px;width:48px;height:12px;background:#e5e5e5;"></div>
<svg style="left:243px;top:125px;" width="698" height="12" viewBox="0 0 698 12"><rect x="0" y="3" width="1" height="6" fill="#555"/><rect x="12" y="5" width="1" height="2" fill="#666"/><rect x="24" y="5" width="1" height="2" fill="#666"/><rect x="36" y="5" width="1" height="2" fill="#666"/><rect x="60" y="5" width="1" height="2" fill="#666"/><rect x="72" y="5" width="1" height="2" fill="#666"/><rect x="84" y="5" width="1" height="2" fill="#666"/><rect x="96" y="3" width="1" height="6" fill="#555"/><rect x="108" y="5" width="1" height="2" fill="#666"/><rect x="120" y="5" width="1" height="2" fill="#666"/><rect x="132" y="5" width="1" height="2" fill="#666"/><rect x="156" y="5" width="1" height="2" fill="#666"/><rect x="168" y="5" width="1" height="2" fill="#666"/><rect x="180" y="5" width="1" height="2" fill="#666"/><rect x="192" y="3" width="1" height="6" fill="#555"/><rect x="204" y="5" width="1" height="2" fill="#666"/><rect x="216" y="5" width="1" height="2" fill="#666"/><rect x="228" y="5" width="1" height="2" fill="#666"/><rect x="252" y="5" width="1" height="2" fill="#666"/><rect x="264" y="5" width="1" height="2" fill="#666"/><rect x="276" y="5" width="1" height="2" fill="#666"/><rect x="288" y="3" width="1" height="6" fill="#555"/><rect x="300" y="5" width="1" height="2" fill="#666"/><rect x="312" y="5" width="1" height="2" fill="#666"/><rect x="324" y="5" width="1" height="2" fill="#666"/><rect x="348" y="5" width="1" height="2" fill="#666"/><rect x="360" y="5" width="1" height="2" fill="#666"/><rect x="372" y="5" width="1" height="2" fill="#666"/><rect x="384" y="3" width="1" height="6" fill="#555"/><rect x="396" y="5" width="1" height="2" fill="#666"/><rect x="408" y="5" width="1" height="2" fill="#666"/><rect x="420" y="5" width="1" height="2" fill="#666"/><rect x="444" y="5" width="1" height="2" fill="#666"/><rect x="456" y="5" width="1" height="2" fill="#666"/><rect x="468" y="5" width="1" height="2" fill="#666"/><rect x="480" y="3" width="1" height="6" fill="#555"/><rect x="492" y="5" width="1" height="2" fill="#666"/><rect x="504" y="5" width="1" height="2" fill="#666"/><rect x="516" y="5" width="1" height="2" fill="#666"/><rect x="540" y="5" width="1" height="2" fill="#666"/><rect x="552" y="5" width="1" height="2" fill="#666"/><rect x="564" y="5" width="1" height="2" fill="#666"/><rect x="576" y="3" width="1" height="6" fill="#555"/><rect x="588" y="5" width="1" height="2" fill="#666"/><rect x="600" y="5" width="1" height="2" fill="#666"/><rect x="612" y="5" width="1" height="2" fill="#666"/><rect x="636" y="5" width="1" height="2" fill="#666"/><rect x="648" y="5" width="1" height="2" fill="#666"/><rect x="660" y="5" width="1" height="2" fill="#666"/><rect x="672" y="3" width="1" height="6" fill="#555"/><rect x="684" y="5" width="1" height="2" fill="#666"/></svg>
<div style="left:377px;top:125px;height:12px;line-height:12px;font-size:9px;width:21px;text-align:center;color:#858585;">1</div>
<div style="left:473px;top:125px;height:12px;line-height:12px;font-size:9px;width:21px;text-align:center;color:#858585;">2</div>
<div style="left:569px;top:125px;height:12px;line-height:12px;font-size:9px;width:21px;text-align:center;color:#858585;">3</div>
<div style="left:665px;top:125px;height:12px;line-height:12px;font-size:9px;width:21px;text-align:center;color:#858585;">4</div>
<div style="left:761px;top:125px;height:12px;line-height:12px;font-size:9px;width:21px;text-align:center;color:#858585;">5</div>
<div style="left:857px;top:125px;height:12px;line-height:12px;font-size:9px;width:21px;text-align:center;color:#858585;">6</div>
<div style="left:216px;top:151px;width:12px;height:615px;background:#e5e5e5;"></div>
<div style="left:241px;top:150px;width:700px;height:617px;border:1px solid #c4c4c4;border-right:none;background:#fff;"></div>
<div style="left:242px;top:151px;width:699px;height:48px;background-image:linear-gradient(to right,#e1e1e1 1px,transparent 1px),linear-gradient(to right,#f0f0f0 1px,transparent 1px),linear-gradient(to bottom,#e1e1e1 1px,transparent 1px),linear-gradient(to bottom,#f0f0f0 1px,transparent 1px);background-size:48px 48px,12px 12px,48px 48px,12px 12px;background-position:0px 0px,0px 0px,0px 0px,0px 0px;background-color:#fff;"></div>
<div style="left:290px;top:151px;width:0px;height:48px;border-left:1px dashed #777;"></div>
<div style="left:221px;top:162px;width:2px;height:1px;background:#555;"></div>
<div style="left:221px;top:174px;width:2px;height:1px;background:#555;"></div>
<div style="left:221px;top:186px;width:2px;height:1px;background:#555;"></div>
<div style="left:219px;top:198px;width:6px;height:1px;background:#555;"></div>
<div class="bh" style="left:242px;top:199px;width:699px;height:21px;border-bottom:1px solid #cfcfcf;"></div>
<svg style="left:247.5px;top:207px;" width="8" height="7" viewBox="0 0 8 7"><path d="M0 0H7.600L3.800 6.600Z" fill="#707070"/></svg>
<svg style="left:262px;top:202px;" width="14" height="16" viewBox="0 0 14 16"><rect x="0.500" y="0.500" width="12" height="15" fill="#fff" stroke="#5f92dc"/><path d="M2.500 1V15M10.500 1V15M1 2.500H12M1 13.500H12" stroke="#c5d7f0" stroke-width="1"/><rect x="2.500" y="3" width="8" height="3" fill="#f08a2c" stroke="#d96c10" stroke-width="0.800"/></svg>
<div class="bt" style="left:280px;top:200.5px;height:18px;line-height:18px;font-size:11.5px;letter-spacing:-0.324px;">PageHeader [one band per page]</div>
<div style="left:218px;top:207px;width:8px;height:1px;background:#777;"></div>
<div style="left:218px;top:209px;width:8px;height:1px;background:#777;"></div>
<div style="left:218px;top:211px;width:8px;height:1px;background:#777;"></div>
<div style="left:242px;top:220px;width:699px;height:132px;background-image:linear-gradient(to right,#e1e1e1 1px,transparent 1px),linear-gradient(to right,#f0f0f0 1px,transparent 1px),linear-gradient(to bottom,#e1e1e1 1px,transparent 1px),linear-gradient(to bottom,#f0f0f0 1px,transparent 1px);background-size:48px 48px,12px 12px,48px 48px,12px 12px;background-position:0px 0px,0px 0px,0px 0px,0px 0px;background-color:#fff;"></div>
<div style="left:290px;top:220px;width:0px;height:132px;border-left:1px dashed #777;"></div>
<div style="left:217px;top:221px;width:10px;height:130px;background:#fff;"></div>
<div style="left:221px;top:231px;width:2px;height:1px;background:#555;"></div>
<div style="left:221px;top:243px;width:2px;height:1px;background:#555;"></div>
<div style="left:221px;top:255px;width:2px;height:1px;background:#555;"></div>
<div style="left:219px;top:267px;width:6px;height:1px;background:#555;"></div>
<div style="left:221px;top:279px;width:2px;height:1px;background:#555;"></div>
<div style="left:221px;top:291px;width:2px;height:1px;background:#555;"></div>
<div style="left:221px;top:303px;width:2px;height:1px;background:#555;"></div>
<div style="left:216px;top:309px;height:12px;line-height:12px;font-size:9px;width:12px;text-align:center;color:#b07848;">1</div>
<div style="left:221px;top:327px;width:2px;height:1px;background:#555;"></div>
<div style="left:221px;top:339px;width:2px;height:1px;background:#555;"></div>
<div style="left:221px;top:351px;width:2px;height:1px;background:#555;"></div>
<div class="bh" style="left:242px;top:352px;width:699px;height:21px;border-bottom:1px solid #cfcfcf;"></div>
<svg style="left:247.5px;top:360px;" width="8" height="7" viewBox="0 0 8 7"><path d="M0 0H7.600L3.800 6.600Z" fill="#707070"/></svg>
<svg style="left:262px;top:355px;" width="14" height="16" viewBox="0 0 14 16"><rect x="0.500" y="0.500" width="12" height="15" fill="#fff" stroke="#5f92dc"/><path d="M2.500 1V15M10.500 1V15M1 2.500H12M1 13.500H12" stroke="#c5d7f0" stroke-width="1"/><rect x="3.500" y="3.500" width="6" height="9" fill="#fff" stroke="#666" stroke-width="0.900"/><path d="M5 6.500H8M5 8.500H8M5 10.500H7" stroke="#666" stroke-width="0.900"/></svg>
<div class="bt" style="left:280px;top:353.5px;height:18px;line-height:18px;font-size:11.5px;letter-spacing:-0.283px;">Detail</div>
<div style="left:218px;top:360px;width:8px;height:1px;background:#777;"></div>
<div style="left:218px;top:362px;width:8px;height:1px;background:#777;"></div>
<div style="left:218px;top:364px;width:8px;height:1px;background:#777;"></div>
<div class="bh" style="left:242px;top:372px;width:699px;height:21px;border-bottom:1px solid #cfcfcf;"></div>
<svg style="left:247.5px;top:380px;" width="8" height="7" viewBox="0 0 8 7"><path d="M0 0H7.600L3.800 6.600Z" fill="#707070"/></svg>
<svg style="left:262px;top:375px;" width="14" height="16" viewBox="0 0 14 16"><rect x="0.500" y="0.500" width="12" height="15" fill="#fff" stroke="#5f92dc"/><path d="M2.500 1V15M10.500 1V15M1 2.500H12M1 13.500H12" stroke="#c5d7f0" stroke-width="1"/><rect x="3.500" y="3.500" width="6" height="9.500" fill="#fff" stroke="#555" stroke-width="0.900"/><rect x="4.500" y="2" width="4" height="2" rx="0.800" fill="#3c6db5"/><path d="M5 6.500H8M5 8.500H8M5 10.500H7" stroke="#555" stroke-width="0.900"/></svg>
<div class="bt" style="left:280px;top:373.5px;height:18px;line-height:18px;font-size:11.5px;letter-spacing:-0.222px;">DetailReport1 - "CAD-BOM 1_GridData"</div>
<div style="left:218px;top:380px;width:8px;height:1px;background:#777;"></div>
<div style="left:218px;top:382px;width:8px;height:1px;background:#777;"></div>
<div style="left:218px;top:384px;width:8px;height:1px;background:#777;"></div>
<div class="bh" style="left:242px;top:392px;width:699px;height:21px;border-bottom:1px solid #cfcfcf;"></div>
<svg style="left:267.5px;top:400px;" width="8" height="7" viewBox="0 0 8 7"><path d="M0 0H7.600L3.800 6.600Z" fill="#707070"/></svg>
<svg style="left:281px;top:394px;" width="14" height="16" viewBox="0 0 14 16"><rect x="1" y="1.500" width="11" height="3" fill="#ef8a2c" stroke="#d96c10" stroke-width="0.800"/><path d="M3 7.500H14M3 9.500H14" stroke="#555" stroke-width="1"/><rect x="0.500" y="11.500" width="11" height="3" fill="#8a97a8" stroke="#5f6c7d" stroke-width="0.800"/></svg>
<div class="bt" style="left:300px;top:393.5px;height:18px;line-height:18px;font-size:11.5px;letter-spacing:-0.328px;">GroupHeader1a</div>
<div style="left:242px;top:413px;width:699px;height:39px;background-image:linear-gradient(to right,#e1e1e1 1px,transparent 1px),linear-gradient(to right,#f0f0f0 1px,transparent 1px),linear-gradient(to bottom,#e1e1e1 1px,transparent 1px),linear-gradient(to bottom,#f0f0f0 1px,transparent 1px);background-size:48px 48px,12px 12px,48px 48px,12px 12px;background-position:0px 0px,0px 0px,0px 0px,0px 0px;background-color:#fff;"></div>
<div style="left:290px;top:413px;width:0px;height:39px;border-left:1px dashed #777;"></div>
<div style="left:217px;top:414px;width:10px;height:37px;background:#fff;"></div>
<div style="left:221px;top:424px;width:2px;height:1px;background:#555;"></div>
<div style="left:221px;top:436px;width:2px;height:1px;background:#555;"></div>
<div style="left:221px;top:448px;width:2px;height:1px;background:#555;"></div>
<div class="bh" style="left:242px;top:452px;width:699px;height:21px;border-bottom:1px solid #cfcfcf;"></div>
<svg style="left:267.5px;top:460px;" width="8" height="7" viewBox="0 0 8 7"><path d="M0 0H7.600L3.800 6.600Z" fill="#707070"/></svg>
<svg style="left:281px;top:454px;" width="14" height="16" viewBox="0 0 14 16"><rect x="1" y="1.500" width="11" height="3" fill="#ef8a2c" stroke="#d96c10" stroke-width="0.800"/><path d="M3 7.500H14M3 9.500H14" stroke="#555" stroke-width="1"/><rect x="0.500" y="11.500" width="11" height="3" fill="#8a97a8" stroke="#5f6c7d" stroke-width="0.800"/></svg>
<div class="bt" style="left:300px;top:453.5px;height:18px;line-height:18px;font-size:11.5px;letter-spacing:-0.297px;">GroupHeader1b</div>
<div style="left:218px;top:460px;width:8px;height:1px;background:#777;"></div>
<div style="left:218px;top:462px;width:8px;height:1px;background:#777;"></div>
<div style="left:218px;top:464px;width:8px;height:1px;background:#777;"></div>
<div style="left:242px;top:473px;width:699px;height:15px;background-image:linear-gradient(to right,#e1e1e1 1px,transparent 1px),linear-gradient(to right,#f0f0f0 1px,transparent 1px),linear-gradient(to bottom,#e1e1e1 1px,transparent 1px),linear-gradient(to bottom,#f0f0f0 1px,transparent 1px);background-size:48px 48px,12px 12px,48px 48px,12px 12px;background-position:0px 0px,0px 0px,0px 0px,0px 0px;background-color:#fff;"></div>
<div style="left:290px;top:473px;width:0px;height:15px;border-left:1px dashed #777;"></div>
<div style="left:217px;top:474px;width:10px;height:13px;background:#fff;"></div>
<div style="left:221px;top:484px;width:2px;height:1px;background:#555;"></div>
<div class="bh" style="left:242px;top:488px;width:699px;height:21px;border-bottom:1px solid #cfcfcf;"></div>
<svg style="left:267.5px;top:496px;" width="8" height="7" viewBox="0 0 8 7"><path d="M0 0H7.600L3.800 6.600Z" fill="#707070"/></svg>
<svg style="left:282px;top:491px;" width="14" height="16" viewBox="0 0 14 16"><rect x="0.500" y="0.500" width="12" height="15" fill="#fff" stroke="#5f92dc"/><path d="M2.500 1V15M10.500 1V15M1 2.500H12M1 13.500H12" stroke="#c5d7f0" stroke-width="1"/><rect x="3.500" y="3.500" width="6" height="9" fill="#fff" stroke="#666" stroke-width="0.900"/><path d="M5 6.500H8M5 8.500H8M5 10.500H7" stroke="#666" stroke-width="0.900"/></svg>
<div class="bt" style="left:300px;top:489.5px;height:18px;line-height:18px;font-size:11.5px;letter-spacing:-0.256px;">Detail1</div>
<div style="left:218px;top:496px;width:8px;height:1px;background:#777;"></div>
<div style="left:218px;top:498px;width:8px;height:1px;background:#777;"></div>
<div style="left:218px;top:500px;width:8px;height:1px;background:#777;"></div>
<div class="bh" style="left:242px;top:508px;width:699px;height:21px;border-bottom:1px solid #cfcfcf;"></div>
<svg style="left:249px;top:514px;" width="6" height="9" viewBox="0 0 6 9"><path d="M0 0.500V8.500L6 4.500Z" fill="#7d7d7d"/></svg>
<svg style="left:262px;top:511px;" width="14" height="16" viewBox="0 0 14 16"><rect x="0.500" y="0.500" width="12" height="15" fill="#fff" stroke="#5f92dc"/><path d="M2.500 1V15M10.500 1V15M1 2.500H12M1 13.500H12" stroke="#c5d7f0" stroke-width="1"/><rect x="3.500" y="3.500" width="6" height="9.500" fill="#fff" stroke="#555" stroke-width="0.900"/><rect x="4.500" y="2" width="4" height="2" rx="0.800" fill="#3c6db5"/><path d="M5 6.500H8M5 8.500H8M5 10.500H7" stroke="#555" stroke-width="0.900"/></svg>
<div class="bt" style="left:280px;top:509.5px;height:18px;line-height:18px;font-size:11.5px;letter-spacing:-0.216px;">DetailReport3</div>
<div style="left:218px;top:516px;width:8px;height:1px;background:#777;"></div>
<div style="left:218px;top:518px;width:8px;height:1px;background:#777;"></div>
<div style="left:218px;top:520px;width:8px;height:1px;background:#777;"></div>
<div class="bh" style="left:242px;top:528px;width:699px;height:21px;border-bottom:1px solid #cfcfcf;"></div>
<svg style="left:249px;top:534px;" width="6" height="9" viewBox="0 0 6 9"><path d="M0 0.500V8.500L6 4.500Z" fill="#7d7d7d"/></svg>
<svg style="left:262px;top:531px;" width="14" height="16" viewBox="0 0 14 16"><rect x="0.500" y="0.500" width="12" height="15" fill="#fff" stroke="#5f92dc"/><path d="M2.500 1V15M10.500 1V15M1 2.500H12M1 13.500H12" stroke="#c5d7f0" stroke-width="1"/><rect x="3.500" y="3.500" width="6" height="9.500" fill="#fff" stroke="#555" stroke-width="0.900"/><rect x="4.500" y="2" width="4" height="2" rx="0.800" fill="#3c6db5"/><path d="M5 6.500H8M5 8.500H8M5 10.500H7" stroke="#555" stroke-width="0.900"/></svg>
<div class="bt" style="left:280px;top:529.5px;height:18px;line-height:18px;font-size:11.5px;letter-spacing:-0.216px;">DetailReport4</div>
<div class="bh" style="left:242px;top:548px;width:699px;height:21px;border-bottom:1px solid #cfcfcf;"></div>
<svg style="left:249px;top:554px;" width="6" height="9" viewBox="0 0 6 9"><path d="M0 0.500V8.500L6 4.500Z" fill="#7d7d7d"/></svg>
<svg style="left:262px;top:551px;" width="14" height="16" viewBox="0 0 14 16"><rect x="0.500" y="0.500" width="12" height="15" fill="#fff" stroke="#5f92dc"/><path d="M2.500 1V15M10.500 1V15M1 2.500H12M1 13.500H12" stroke="#c5d7f0" stroke-width="1"/><rect x="3.500" y="3.500" width="6" height="9.500" fill="#fff" stroke="#555" stroke-width="0.900"/><rect x="4.500" y="2" width="4" height="2" rx="0.800" fill="#3c6db5"/><path d="M5 6.500H8M5 8.500H8M5 10.500H7" stroke="#555" stroke-width="0.900"/></svg>
<div class="bt" style="left:280px;top:549.5px;height:18px;line-height:18px;font-size:11.5px;letter-spacing:-0.216px;">DetailReport5</div>
<div class="bh" style="left:242px;top:568px;width:699px;height:21px;border-bottom:1px solid #cfcfcf;"></div>
<svg style="left:249px;top:574px;" width="6" height="9" viewBox="0 0 6 9"><path d="M0 0.500V8.500L6 4.500Z" fill="#7d7d7d"/></svg>
<svg style="left:262px;top:571px;" width="14" height="16" viewBox="0 0 14 16"><rect x="0.500" y="0.500" width="12" height="15" fill="#fff" stroke="#5f92dc"/><path d="M2.500 1V15M10.500 1V15M1 2.500H12M1 13.500H12" stroke="#c5d7f0" stroke-width="1"/><rect x="3.500" y="3.500" width="6" height="9.500" fill="#fff" stroke="#555" stroke-width="0.900"/><rect x="4.500" y="2" width="4" height="2" rx="0.800" fill="#3c6db5"/><path d="M5 6.500H8M5 8.500H8M5 10.500H7" stroke="#555" stroke-width="0.900"/></svg>
<div class="bt" style="left:280px;top:569.5px;height:18px;line-height:18px;font-size:11.5px;letter-spacing:-0.216px;">DetailReport6</div>
<div class="bh" style="left:242px;top:588px;width:699px;height:21px;border-bottom:1px solid #cfcfcf;"></div>
<svg style="left:249px;top:594px;" width="6" height="9" viewBox="0 0 6 9"><path d="M0 0.500V8.500L6 4.500Z" fill="#7d7d7d"/></svg>
<svg style="left:262px;top:591px;" width="14" height="16" viewBox="0 0 14 16"><rect x="0.500" y="0.500" width="12" height="15" fill="#fff" stroke="#5f92dc"/><path d="M2.500 1V15M10.500 1V15M1 2.500H12M1 13.500H12" stroke="#c5d7f0" stroke-width="1"/><rect x="3.500" y="3.500" width="6" height="9.500" fill="#fff" stroke="#555" stroke-width="0.900"/><rect x="4.500" y="2" width="4" height="2" rx="0.800" fill="#3c6db5"/><path d="M5 6.500H8M5 8.500H8M5 10.500H7" stroke="#555" stroke-width="0.900"/></svg>
<div class="bt" style="left:280px;top:589.5px;height:18px;line-height:18px;font-size:11.5px;letter-spacing:-0.216px;">DetailReport7</div>
<div class="bh" style="left:242px;top:608px;width:699px;height:21px;border-bottom:1px solid #cfcfcf;"></div>
<svg style="left:249px;top:614px;" width="6" height="9" viewBox="0 0 6 9"><path d="M0 0.500V8.500L6 4.500Z" fill="#7d7d7d"/></svg>
<svg style="left:262px;top:611px;" width="14" height="16" viewBox="0 0 14 16"><rect x="0.500" y="0.500" width="12" height="15" fill="#fff" stroke="#5f92dc"/><path d="M2.500 1V15M10.500 1V15M1 2.500H12M1 13.500H12" stroke="#c5d7f0" stroke-width="1"/><rect x="3.500" y="3.500" width="6" height="9.500" fill="#fff" stroke="#555" stroke-width="0.900"/><rect x="4.500" y="2" width="4" height="2" rx="0.800" fill="#3c6db5"/><path d="M5 6.500H8M5 8.500H8M5 10.500H7" stroke="#555" stroke-width="0.900"/></svg>
<div class="bt" style="left:280px;top:609.5px;height:18px;line-height:18px;font-size:11.5px;letter-spacing:-0.216px;">DetailReport8</div>
<div class="bh" style="left:242px;top:628px;width:699px;height:21px;border-bottom:1px solid #cfcfcf;"></div>
<svg style="left:249px;top:634px;" width="6" height="9" viewBox="0 0 6 9"><path d="M0 0.500V8.500L6 4.500Z" fill="#7d7d7d"/></svg>
<svg style="left:262px;top:631px;" width="14" height="16" viewBox="0 0 14 16"><rect x="0.500" y="0.500" width="12" height="15" fill="#fff" stroke="#5f92dc"/><path d="M2.500 1V15M10.500 1V15M1 2.500H12M1 13.500H12" stroke="#c5d7f0" stroke-width="1"/><rect x="3.500" y="3.500" width="6" height="9.500" fill="#fff" stroke="#555" stroke-width="0.900"/><rect x="4.500" y="2" width="4" height="2" rx="0.800" fill="#3c6db5"/><path d="M5 6.500H8M5 8.500H8M5 10.500H7" stroke="#555" stroke-width="0.900"/></svg>
<div class="bt" style="left:280px;top:629.5px;height:18px;line-height:18px;font-size:11.5px;letter-spacing:-0.228px;">DetailReport9 - "CAD-BOM 1_GridData"</div>
<div class="bh" style="left:242px;top:648px;width:699px;height:21px;border-bottom:1px solid #cfcfcf;"></div>
<svg style="left:249px;top:654px;" width="6" height="9" viewBox="0 0 6 9"><path d="M0 0.500V8.500L6 4.500Z" fill="#7d7d7d"/></svg>
<svg style="left:262px;top:651px;" width="14" height="16" viewBox="0 0 14 16"><rect x="0.500" y="0.500" width="12" height="15" fill="#fff" stroke="#5f92dc"/><path d="M2.500 1V15M10.500 1V15M1 2.500H12M1 13.500H12" stroke="#c5d7f0" stroke-width="1"/><rect x="3.500" y="3.500" width="6" height="9.500" fill="#fff" stroke="#555" stroke-width="0.900"/><rect x="4.500" y="2" width="4" height="2" rx="0.800" fill="#3c6db5"/><path d="M5 6.500H8M5 8.500H8M5 10.500H7" stroke="#555" stroke-width="0.900"/></svg>
<div class="bt" style="left:280px;top:649.5px;height:18px;line-height:18px;font-size:11.5px;letter-spacing:-0.193px;">DetailReport10</div>
<div class="bh" style="left:242px;top:668px;width:699px;height:21px;border-bottom:1px solid #cfcfcf;"></div>
<svg style="left:247.5px;top:676px;" width="8" height="7" viewBox="0 0 8 7"><path d="M0 0H7.600L3.800 6.600Z" fill="#707070"/></svg>
<svg style="left:262px;top:671px;" width="14" height="16" viewBox="0 0 14 16"><rect x="0.500" y="0.500" width="12" height="15" fill="#fff" stroke="#5f92dc"/><path d="M2.500 1V15M10.500 1V15M1 2.500H12M1 13.500H12" stroke="#c5d7f0" stroke-width="1"/><rect x="2.500" y="9" width="8" height="4" fill="#5dbb2e" stroke="#3f9418" stroke-width="0.800"/><rect x="3.500" y="-0.500" width="6" height="2.500" fill="#5f92dc"/></svg>
<div class="bt" style="left:280px;top:669.5px;height:18px;line-height:18px;font-size:11.5px;letter-spacing:-0.314px;">PageFooter [one band per page]</div>
<div style="left:242px;top:689px;width:699px;height:30px;background-image:linear-gradient(to right,#e1e1e1 1px,transparent 1px),linear-gradient(to right,#f0f0f0 1px,transparent 1px),linear-gradient(to bottom,#e1e1e1 1px,transparent 1px),linear-gradient(to bottom,#f0f0f0 1px,transparent 1px);background-size:48px 48px,12px 12px,48px 48px,12px 12px;background-position:0px 0px,0px 0px,0px 0px,0px 0px;background-color:#fff;"></div>
<div style="left:290px;top:689px;width:0px;height:30px;border-left:1px dashed #777;"></div>
<div style="left:217px;top:690px;width:10px;height:28px;background:#fff;"></div>
<div style="left:221px;top:700px;width:2px;height:1px;background:#555;"></div>
<div style="left:221px;top:712px;width:2px;height:1px;background:#555;"></div>
<div style="left:242px;top:718px;width:699px;height:0px;border-top:1px dashed #888;"></div>
<div style="left:242px;top:719px;width:699px;height:47px;background-image:linear-gradient(to right,#e1e1e1 1px,transparent 1px),linear-gradient(to right,#f0f0f0 1px,transparent 1px),linear-gradient(to bottom,#e1e1e1 1px,transparent 1px),linear-gradient(to bottom,#f0f0f0 1px,transparent 1px);background-size:48px 48px,12px 12px,48px 48px,12px 12px;background-position:0px 46px,0px 10px,0px 46px,0px 10px;background-color:#fff;"></div>
<div style="left:290px;top:719px;width:0px;height:47px;border-left:1px dashed #777;"></div>
<div style="left:221px;top:729px;width:2px;height:1px;background:#555;"></div>
<div style="left:221px;top:741px;width:2px;height:1px;background:#555;"></div>
<div style="left:221px;top:753px;width:2px;height:1px;background:#555;"></div>
<div style="left:219px;top:765px;width:6px;height:1px;background:#555;"></div>
<div style="left:242px;top:488px;width:0px;height:0px;"></div>
<div style="left:302px;top:232px;width:180px;height:60px;border:1px solid #ababab;background:rgba(255,255,255,0.6);"></div>
<div style="left:315.5px;top:250.5px;height:28px;line-height:28px;font-size:22.5px;transform:scaleX(1.160);transform-origin:left;letter-spacing:-0.2px;"><span style="color:#808080;">Factory</span></div>
<div style="left:402px;top:251px;height:28px;line-height:28px;font-size:22px;transform:scaleX(1.075);transform-origin:left;letter-spacing:-0.2px;"><span style="color:#111;font-weight:bold;">Logix</span></div>
<div style="left:417.5px;top:241.5px;height:9px;line-height:9px;font-size:6px;font-weight:bold;color:#222;transform:scaleX(1.660);transform-origin:left;">AEGIS</div>
<div style="left:418px;top:249.5px;height:4px;line-height:4px;font-size:3px;color:#aaa;letter-spacing:2px;">SOFTWARE</div>
<svg style="left:450px;top:237px;" width="12" height="11" viewBox="0 0 12 11"><path d="M5.500 0L0 5.500L5.500 11Z" fill="#e0322f"/><path d="M6.500 1L11.500 5.500L9 7.500V5H7.500V9.500L6.500 10.500Z" fill="#e0322f"/></svg>
<div style="left:464px;top:256px;height:5px;line-height:5px;font-size:4px;color:#999;">™</div>
<div style="left:317px;top:279px;height:8px;line-height:8px;font-size:5.8px;color:#222;letter-spacing:0.098px;">The Intelligent Framework of Manufacturing Operations</div>
<div style="left:494px;top:244px;width:447px;height:36px;background:rgba(240,150,170,0.32);border:1px solid #e05580;border-right:none;"></div>
<div style="left:602px;top:244px;width:48px;height:36px;background:rgba(235,120,150,0.30);border:1px solid #e05580;"></div>
<div style="left:602px;top:262px;width:339px;height:1px;background:#553040;"></div>
<div style="left:496px;top:251px;height:22px;line-height:22px;font-size:16.5px;font-weight:bold;color:#94747f;letter-spacing:0.050px;">DHR Report</div>
<div style="left:290px;top:304.4px;width:651px;height:1.2px;background:#000;"></div>
<div style="left:290px;top:327.6px;width:651px;height:1.5px;background:#000;"></div>
<div style="left:290px;top:350.4px;width:651px;height:1.2px;background:#000;"></div>
<div style="left:290.3px;top:304.4px;width:1.2px;height:47.2px;background:#000;"></div>
<div style="left:361.3px;top:304.4px;width:1.5px;height:47.2px;background:#000;"></div>
<div style="left:529.3px;top:304.4px;width:1.5px;height:47.2px;background:#000;"></div>
<div style="left:601.3px;top:304.4px;width:1.5px;height:47.2px;background:#000;"></div>
<div style="left:829.3px;top:304.4px;width:1.5px;height:47.2px;background:#000;"></div>
<div style="left:925.3px;top:304.4px;width:1.5px;height:47.2px;background:#000;"></div>
<div style="left:293px;top:308px;height:15px;line-height:15px;font-size:11px;font-weight:bold;color:#111;width:66px;text-align:right;">Customer:</div>
<div style="left:293px;top:332px;height:15px;line-height:15px;font-size:11px;font-weight:bold;color:#111;width:66px;text-align:right;">Work Order:</div>
<div style="left:366px;top:308px;height:15px;line-height:15px;font-size:11px;font-weight:bold;color:#111;">[WIP 1_GridData.Customer]</div>
<div style="left:366px;top:332px;height:15px;line-height:15px;font-size:11px;font-weight:bold;color:#111;">[WIP 1_GridData.Batch]</div>
<svg style="left:520px;top:306px;" width="8" height="10" viewBox="0 0 8 10"><path d="M0.500 2V8Q0.500 9.500 4 9.500Q7.500 9.500 7.500 8V2" fill="url(#gCy)" stroke="#7a5a10" stroke-width="0.900"/><ellipse cx="4" cy="2" rx="3.500" ry="1.500" fill="#fbe9a8" stroke="#7a5a10" stroke-width="0.900"/></svg>
<svg style="left:520px;top:330px;" width="8" height="10" viewBox="0 0 8 10"><path d="M0.500 2V8Q0.500 9.500 4 9.500Q7.500 9.500 7.500 8V2" fill="url(#gCy)" stroke="#7a5a10" stroke-width="0.900"/><ellipse cx="4" cy="2" rx="3.500" ry="1.500" fill="#fbe9a8" stroke="#7a5a10" stroke-width="0.900"/></svg>
<div style="left:532px;top:308px;height:15px;line-height:15px;font-size:11px;font-weight:bold;color:#111;width:67px;text-align:right;">Assembly:</div>
<div style="left:532px;top:332px;height:15px;line-height:15px;font-size:11px;font-weight:bold;color:#111;width:67px;text-align:right;">Date:</div>
<div style="left:606px;top:308px;height:15px;line-height:15px;font-size:11px;font-weight:bold;color:#111;">[WIP 1_GridData.Assembly]</div>
<div style="left:606px;top:332px;height:15px;line-height:15px;font-size:11px;font-weight:bold;color:#111;">October 21, 2019</div>
<svg style="left:820px;top:306px;" width="8" height="10" viewBox="0 0 8 10"><path d="M0.500 2V8Q0.500 9.500 4 9.500Q7.500 9.500 7.500 8V2" fill="url(#gCy)" stroke="#7a5a10" stroke-width="0.900"/><ellipse cx="4" cy="2" rx="3.500" ry="1.500" fill="#fbe9a8" stroke="#7a5a10" stroke-width="0.900"/></svg>
<div style="left:832px;top:308px;height:15px;line-height:15px;font-size:11px;font-weight:bold;color:#111;width:90px;text-align:right;">Assembly Rev:</div>
<div style="left:832px;top:332px;height:15px;line-height:15px;font-size:11px;font-weight:bold;color:#111;width:90px;text-align:right;">S/N:</div>
<div style="left:927px;top:306px;width:14px;height:21px;overflow:hidden;"><div style="left:3px;top:2px;height:15px;line-height:15px;font-size:11px;font-weight:bold;color:#111;">[WIP</div></div>
<div style="left:927px;top:330px;width:14px;height:20px;overflow:hidden;"><div style="left:3px;top:2px;height:15px;line-height:15px;font-size:11px;font-weight:bold;color:#111;">[WIP</div></div>
<div style="left:290px;top:413px;width:24px;height:24px;background:#cd5c5c;"></div>
<div style="left:314px;top:413px;width:12px;height:24px;background:#fbd5b5;border:1px solid #de3a62;border-right:none;"></div>
<div style="left:326px;top:413px;width:204px;height:24px;background:#f6b9a7;border:1px solid #de3a62;"></div>
<div style="left:529px;top:413px;width:412px;height:24px;background:#fad7b8;border:1px solid #de3a62;border-right:none;"></div>
<div style="left:328px;top:416px;height:19px;line-height:19px;font-size:13px;letter-spacing:-0.060px;font-weight:bold;color:#3a0d18;">Assembly BOM Details</div>
<div style="left:290px;top:436px;width:24px;height:16px;background:#dcbfc6;border:1px solid #de3a62;border-left:none;"></div>
<div style="left:313px;top:436px;width:73px;height:16px;background:#dba0b0;border:1px solid #de3a62;"></div>
<div style="left:385px;top:436px;width:145px;height:16px;background:#dba0b0;border:1px solid #de3a62;"></div>
<div style="left:529px;top:436px;width:412px;height:16px;background:#dba0b0;border:1px solid #de3a62;border-right:none;"></div>
<div style="left:317px;top:437px;height:14px;line-height:14px;font-size:11px;font-weight:bold;color:#3a0d18;">Line #</div>
<div style="left:389px;top:437px;height:14px;line-height:14px;font-size:11px;font-weight:bold;color:#3a0d18;">Part Number</div>
<div style="left:533px;top:437px;height:14px;line-height:14px;font-size:11px;font-weight:bold;color:#3a0d18;">Part Description</div>
<div style="left:314px;top:472px;width:72px;height:16px;border:1px solid #cfcfcf;overflow:hidden;"><div style="left:1px;top:-1px;height:15px;line-height:15px;font-size:11px;color:#111;">[Line Item Number]</div></div>
<div style="left:385px;top:472px;width:145px;height:16px;border:1px solid #cfcfcf;"></div>
<div style="left:529px;top:472px;width:412px;height:16px;border:1px solid #cfcfcf;border-right:none;"></div>
<div style="left:388px;top:473px;height:15px;line-height:15px;font-size:11px;color:#111;">[Internal Part Number]</div>
<div style="left:532px;top:473px;height:15px;line-height:15px;font-size:11px;color:#111;">[Description]</div>
<svg style="left:376px;top:475px;" width="8" height="10" viewBox="0 0 8 10"><path d="M0.500 2V8Q0.500 9.500 4 9.500Q7.500 9.500 7.500 8V2" fill="url(#gCy)" stroke="#7a5a10" stroke-width="0.900"/><ellipse cx="4" cy="2" rx="3.500" ry="1.500" fill="#fbe9a8" stroke="#7a5a10" stroke-width="0.900"/></svg>
<svg style="left:520px;top:475px;" width="8" height="10" viewBox="0 0 8 10"><path d="M0.500 2V8Q0.500 9.500 4 9.500Q7.500 9.500 7.500 8V2" fill="url(#gCy)" stroke="#7a5a10" stroke-width="0.900"/><ellipse cx="4" cy="2" rx="3.500" ry="1.500" fill="#fbe9a8" stroke="#7a5a10" stroke-width="0.900"/></svg>
<div style="left:236px;top:844px;width:705px;height:17px;background:#efefef;"></div>
<div style="left:253px;top:844px;width:441px;height:17px;background:#cdcdcd;"></div>
<svg style="left:240px;top:848px;" width="7" height="10" viewBox="0 0 7 10"><path d="M5.500 1L1.500 5L5.500 9" stroke="#555" stroke-width="2" fill="none"/></svg>
<svg style="left:929px;top:848px;" width="7" height="10" viewBox="0 0 7 10"><path d="M1.500 1L5.500 5L1.500 9" stroke="#555" stroke-width="2" fill="none"/></svg>
<div style="left:203px;top:861px;width:738px;height:28px;background:#0072c6;"></div>
<svg style="left:211px;top:868px;" width="15" height="16" viewBox="0 0 15 16"><path d="M0.500 13.500H13.500V0.500ZM5.500 11.500L11.500 5.500V11.500Z" fill="#f5a93f" stroke="#d9831f" stroke-width="0.600" fill-rule="evenodd"/><path d="M3 4.500L8.500 13.500" stroke="#f0932b" stroke-width="2.400"/><path d="M2 3L3.200 5" stroke="#e8507a" stroke-width="2.600"/><path d="M8 12.500L9.300 14.800L7 13.500Z" fill="#ddd" stroke="#222" stroke-width="0.500"/></svg>
<div style="left:231px;top:867px;height:17px;line-height:17px;font-size:12px;color:#fff;letter-spacing:-0.378px;">Designer</div>
<div style="left:284px;top:866px;width:1px;height:18px;background:#9cc4e6;"></div>
<svg style="left:295px;top:868px;" width="14" height="15" viewBox="0 0 14 15"><path d="M1.500 0.500H8L11 3.500V13.500H1.500Z" fill="#f4f4f4" stroke="#cfd6de" stroke-width="0.800"/><circle cx="9" cy="8.500" r="3" fill="#dfefff" stroke="#444" stroke-width="1.200"/><path d="M7 11L3.500 14.500" stroke="#c87a2a" stroke-width="2"/></svg>
<div style="left:313px;top:867px;height:17px;line-height:17px;font-size:12px;color:#fff;letter-spacing:-0.169px;">Preview</div>
<svg style="left:364px;top:868px;" width="16" height="15" viewBox="0 0 16 15"><path d="M4.500 0.500H11L13.500 3V12.500H4.500Z" fill="#f4f4f4" stroke="#cfd6de" stroke-width="0.800"/><circle cx="4.500" cy="5" r="3.800" fill="#3f9a3a" stroke="#9bd0f0" stroke-width="0.800"/><path d="M2.500 3.500Q4 1.500 6 3Q5.500 5 3.500 6Z" fill="#7fc6f0"/><circle cx="11.500" cy="8.500" r="3" fill="#dfefff" stroke="#444" stroke-width="1.200"/><path d="M9.500 11L6.500 14.500" stroke="#c87a2a" stroke-width="2"/></svg>
<div style="left:384px;top:867px;height:17px;line-height:17px;font-size:12px;color:#fff;letter-spacing:-0.094px;">HTML View</div>
<div style="left:453px;top:866px;width:1px;height:18px;background:#9cc4e6;"></div>
<svg style="left:462px;top:868px;" width="16" height="15" viewBox="0 0 16 15"><path d="M4 0.500H14V12.500H4Z" fill="#f4f4f4" stroke="#cfd6de" stroke-width="0.800"/><text x="10" y="8.500" font-size="7.500" font-weight="bold" text-anchor="middle" font-family="Liberation Sans,sans-serif" fill="#335">{}</text><path d="M1 2L9 12" stroke="#e8701a" stroke-width="2.200"/><path d="M8.500 11L10 14L7 12.500Z" fill="#f2d28a"/><path d="M0.500 1L2 3" stroke="#d33" stroke-width="2.200"/></svg>
<div style="left:482px;top:867px;height:17px;line-height:17px;font-size:12px;color:#fff;letter-spacing:-0.239px;">Scripts</div>
<div style="left:525px;top:866px;width:1px;height:18px;background:#9cc4e6;"></div>
<div style="left:538px;top:867px;height:17px;line-height:17px;font-size:12px;color:#fff;letter-spacing:-0.105px;">DetailReport1</div>
<div style="left:749px;top:865px;width:1px;height:20px;background:#dbe9f6;"></div>
<div style="left:759px;top:867px;height:17px;line-height:17px;font-size:12px;color:#fff;letter-spacing:-0.673px;">100%</div>
<div style="left:800px;top:874px;width:6px;height:1px;background:#fff;"></div>
<div style="left:814px;top:874px;width:102px;height:1px;background:#fff;"></div>
<div style="left:863px;top:870px;width:3px;height:9px;background:#fff;"></div>
<div style="left:922px;top:874px;width:7px;height:1px;background:#fff;"></div>
<div style="left:925px;top:871px;width:1px;height:7px;background:#fff;"></div>
<div style="left:1px;top:890px;width:1232px;height:26px;background:#0072c6;"></div>
<div style="left:1230px;top:893px;width:1px;height:20px;background:#e6eef7;"></div>
<div style="left:972px;top:923px;width:75px;height:24px;border:1px solid #adadad;background:#e1e1e1;text-align:center;line-height:22px;font-size:11.500px;letter-spacing:-0.400px;color:#111;">Templates</div>
<div style="left:985px;top:940px;width:7px;height:1px;background:#111;"></div>
<div style="left:1068px;top:923px;width:75px;height:24px;border:1px solid #adadad;background:#e1e1e1;text-align:center;line-height:22px;font-size:11.500px;letter-spacing:-0.400px;color:#111;">OK</div>
<div style="left:1098px;top:940px;width:9px;height:1px;background:#111;"></div>
<div style="left:1149px;top:923px;width:75px;height:24px;border:1px solid #adadad;background:#e1e1e1;text-align:center;line-height:22px;font-size:11.500px;letter-spacing:-0.400px;color:#111;">Cancel</div>
<div style="left:1170px;top:940px;width:8px;height:1px;background:#111;"></div>
<svg style="left:1221px;top:939px;" width="14" height="14" viewBox="0 0 14 14"><path d="M13 1L1 13M13 5L5 13M13 9L9 13" stroke="#8a8a8a" stroke-width="1"/></svg>
<div style="left:944px;top:113px;width:290px;height:775px;border:1px solid #a3a3a3;background:#fff;"></div>
<div style="left:957px;top:121px;height:20px;line-height:20px;font-size:14px;color:#3a3a3a;letter-spacing:-0.157px;">Property Grid</div>
<svg style="left:1194px;top:126px;" width="8" height="10" viewBox="0 0 8 10"><path d="M2 0.500H6M2.500 0.500V5M5.500 0.500V5M5 0.500V5M1 5.500H7M4 5.500V9.500" stroke="#444" stroke-width="1" fill="none"/></svg>
<svg style="left:1212px;top:126px;" width="9" height="9" viewBox="0 0 9 9"><path d="M1 1L8 8M8 1L1 8" stroke="#444" stroke-width="1.500"/></svg>
<div style="left:946px;top:150px;width:286px;height:21px;border:1px solid #ababab;background:#fff;"></div>
<div style="left:1215px;top:150px;width:17px;height:21px;border:1px solid #ababab;background:#e8e8e8;"></div>
<svg style="left:1219px;top:157px;" width="9" height="6" viewBox="0 0 9 6"><path d="M1 1L4.5 4.5L8 1" stroke="#666" stroke-width="1.6" fill="none"/></svg>
<div style="left:950px;top:152px;height:16px;line-height:16px;font-size:12px;font-weight:bold;color:#222;">DataMinerReport&nbsp;&nbsp;&nbsp;Report</div>
<div style="left:948px;top:173px;width:26px;height:24px;background:#b1d6f0;"></div>
<svg style="left:953px;top:177px;" width="17" height="17" viewBox="0 0 17 17"><rect x="0.600" y="0.6" width="5.800" height="5.800" rx="1.200" fill="#fff" stroke="#1f7ff0" stroke-width="1.200"/><path d="M2 3.5H5M3.500 2V5" stroke="#111" stroke-width="1"/><path d="M8 1.5H12" stroke="#111" stroke-width="1"/><path d="M8 3.5H12M13 3.5H16M8 5.5H12M13 5.5H16" stroke="#777" stroke-width="1"/><path d="M8 7.500H12M13 7.500H16" stroke="#777" stroke-width="1"/><rect x="0.600" y="9.6" width="5.800" height="5.800" rx="1.200" fill="#fff" stroke="#1f7ff0" stroke-width="1.200"/><path d="M2 12.5H5M3.500 11V14" stroke="#111" stroke-width="1"/><path d="M8 10.5H12" stroke="#111" stroke-width="1"/><path d="M8 12.5H12M13 12.5H16M8 14.5H12M13 14.5H16" stroke="#777" stroke-width="1"/></svg>
<div style="left:980px;top:176px;height:10px;line-height:10px;font-size:9.7px;font-weight:bold;color:#1f6fe0;">A</div>
<div style="left:980px;top:184px;height:10px;line-height:10px;font-size:9.7px;font-weight:bold;color:#8b1414;">Z</div>
<svg style="left:988px;top:177px;" width="7" height="16" viewBox="0 0 7 16"><path d="M3.500 0V11" stroke="#111" stroke-width="1.100"/><path d="M0.800 9.500H6.200L3.500 15Z" fill="#111"/></svg>
<div style="left:947px;top:199px;width:285px;height:625px;border:1px solid #9c9c9c;background:#fff;"></div>
<div style="left:948px;top:200px;width:266px;height:1px;background:#b9b9b9;"></div>
<div style="left:967px;top:201px;height:17px;line-height:17px;font-size:11.5px;font-weight:bold;color:#0072c6;">Appearance</div>
<svg style="left:1201px;top:207px;" width="7" height="4" viewBox="0 0 7 4"><path d="M0 4H7L3.500 0Z" fill="#555"/></svg>
<div style="left:963px;top:218px;width:251px;height:20px;border:1px solid #d0d0d0;border-right:none;"></div>
<div style="left:1080px;top:218px;width:1px;height:19px;background:#d0d0d0;"></div>
<div style="left:981px;top:219px;width:97px;height:18px;overflow:hidden;"><div style="left:0;top:0;height:18px;line-height:19px;font-size:11px;color:#222;letter-spacing:-0.296px;">Background Color</div></div>
<div style="left:1087px;top:223px;width:22px;height:9px;border:1px solid #222;background:#fff;"></div>
<div style="left:1113px;top:219px;height:19px;line-height:19px;font-size:11px;color:#222;letter-spacing:-0.036px;">Transparent</div>
<div style="left:963px;top:237px;width:251px;height:20px;border:1px solid #d0d0d0;border-right:none;"></div>
<div style="left:1080px;top:237px;width:1px;height:19px;background:#d0d0d0;"></div>
<div style="left:981px;top:238px;width:97px;height:18px;overflow:hidden;"><div style="left:0;top:0;height:18px;line-height:19px;font-size:11px;color:#222;letter-spacing:-0.263px;">Border Color</div></div>
<div style="left:1087px;top:242px;width:22px;height:9px;border:1px solid #222;background:#000;"></div>
<div style="left:1113px;top:238px;height:19px;line-height:19px;font-size:11px;color:#222;letter-spacing:-0.2px;">Black</div>
<div style="left:963px;top:256px;width:251px;height:20px;border:1px solid #d0d0d0;border-right:none;"></div>
<div style="left:1080px;top:256px;width:1px;height:19px;background:#d0d0d0;"></div>
<div style="left:981px;top:257px;width:97px;height:18px;overflow:hidden;"><div style="left:0;top:0;height:18px;line-height:19px;font-size:11px;color:#222;letter-spacing:-0.221px;">Border Dash Style</div></div>
<div style="left:1085px;top:257px;width:128px;height:18px;overflow:hidden;"><div style="left:0;top:0;height:18px;line-height:19px;font-size:11px;color:#222;letter-spacing:-0.2px;">Solid</div></div>
<div style="left:963px;top:275px;width:251px;height:18px;border:1px solid #d0d0d0;border-right:none;"></div>
<div style="left:1080px;top:275px;width:1px;height:17px;background:#d0d0d0;"></div>
<div style="left:981px;top:276px;width:97px;height:16px;overflow:hidden;"><div style="left:0;top:0;height:16px;line-height:17px;font-size:11px;color:#222;letter-spacing:-0.132px;">Border Width</div></div>
<div style="left:1085px;top:276px;width:128px;height:16px;overflow:hidden;"><div style="left:0;top:0;height:16px;line-height:17px;font-size:11px;color:#222;letter-spacing:-0.2px;">1</div></div>
<div style="left:963px;top:292px;width:251px;height:20px;border:1px solid #d0d0d0;border-right:none;"></div>
<div style="left:1080px;top:292px;width:1px;height:19px;background:#d0d0d0;"></div>
<div style="left:981px;top:293px;width:97px;height:18px;overflow:hidden;"><div style="left:0;top:0;height:18px;line-height:19px;font-size:11px;color:#222;letter-spacing:-0.245px;">Borders</div></div>
<div style="left:1085px;top:293px;width:128px;height:18px;overflow:hidden;"><div style="left:0;top:0;height:18px;line-height:19px;font-size:11px;color:#222;letter-spacing:-0.2px;">None</div></div>
<div style="left:963px;top:311px;width:251px;height:20px;border:1px solid #d0d0d0;border-right:none;"></div>
<div style="left:1080px;top:311px;width:1px;height:19px;background:#d0d0d0;"></div>
<div style="left:981px;top:312px;width:97px;height:18px;overflow:hidden;"><div style="left:0;top:0;height:18px;line-height:19px;font-size:11px;color:#222;letter-spacing:-0.027px;">Font</div></div>
<svg style="left:970px;top:317px;" width="5" height="8" viewBox="0 0 5 8"><path d="M0 0V8L4.500 4Z" fill="#666"/></svg>
<div style="left:1085px;top:312px;width:128px;height:18px;overflow:hidden;"><div style="left:0;top:0;height:18px;line-height:19px;font-size:11px;color:#222;letter-spacing:-0.117px;">Times New Roman, 9.7...</div></div>
<div style="left:963px;top:330px;width:251px;height:20px;border:1px solid #d0d0d0;border-right:none;"></div>
<div style="left:1080px;top:330px;width:1px;height:19px;background:#d0d0d0;"></div>
<div style="left:981px;top:331px;width:97px;height:18px;overflow:hidden;"><div style="left:0;top:0;height:18px;line-height:19px;font-size:11px;color:#222;letter-spacing:-0.182px;">Foreground Color</div></div>
<div style="left:1087px;top:335px;width:22px;height:9px;border:1px solid #222;background:#000;"></div>
<div style="left:1113px;top:331px;height:19px;line-height:19px;font-size:11px;color:#222;letter-spacing:-0.2px;">Black</div>
<div style="left:963px;top:349px;width:251px;height:20px;border:1px solid #d0d0d0;border-right:none;"></div>
<div style="left:1080px;top:349px;width:1px;height:19px;background:#d0d0d0;"></div>
<div style="left:981px;top:350px;width:97px;height:18px;overflow:hidden;"><div style="left:0;top:0;height:18px;line-height:19px;font-size:11px;color:#222;letter-spacing:-0.2px;">Formatting Rule Sheet</div></div>
<div style="left:1085px;top:350px;height:19px;line-height:19px;font-size:11.5px;color:#222;font-weight:bold;">(Collection)</div>
<div style="left:963px;top:368px;width:251px;height:20px;border:1px solid #d0d0d0;border-right:none;"></div>
<div style="left:1080px;top:368px;width:1px;height:19px;background:#d0d0d0;"></div>
<div style="left:981px;top:369px;width:97px;height:18px;overflow:hidden;"><div style="left:0;top:0;height:18px;line-height:19px;font-size:11px;color:#222;letter-spacing:-0.190px;">Formatting Rules</div></div>
<div style="left:1085px;top:369px;width:128px;height:18px;overflow:hidden;"><div style="left:0;top:0;height:18px;line-height:19px;font-size:11px;color:#222;letter-spacing:-0.2px;">(Collection)</div></div>
<div style="left:963px;top:387px;width:251px;height:18px;border:1px solid #d0d0d0;border-right:none;"></div>
<div style="left:1080px;top:387px;width:1px;height:17px;background:#d0d0d0;"></div>
<div style="left:981px;top:388px;width:97px;height:16px;overflow:hidden;"><div style="left:0;top:0;height:16px;line-height:17px;font-size:11px;color:#222;letter-spacing:-0.395px;">Padding</div></div>
<svg style="left:970px;top:392px;" width="5" height="8" viewBox="0 0 5 8"><path d="M0 0V8L4.500 4Z" fill="#666"/></svg>
<div style="left:1085px;top:388px;width:128px;height:16px;overflow:hidden;"><div style="left:0;top:0;height:16px;line-height:17px;font-size:11px;color:#222;letter-spacing:-0.2px;">0, 0, 0, 0</div></div>
<div style="left:963px;top:404px;width:251px;height:20px;border:1px solid #d0d0d0;border-right:none;"></div>
<div style="left:1080px;top:404px;width:1px;height:19px;background:#d0d0d0;"></div>
<div style="left:981px;top:405px;width:97px;height:18px;overflow:hidden;"><div style="left:0;top:0;height:18px;line-height:19px;font-size:11px;color:#222;letter-spacing:-0.373px;">Page Color</div></div>
<div style="left:1087px;top:409px;width:22px;height:9px;border:1px solid #222;background:#fff;"></div>
<div style="left:1113px;top:405px;height:19px;line-height:19px;font-size:11px;color:#222;letter-spacing:-0.2px;">White</div>
<div style="left:963px;top:423px;width:251px;height:20px;border:1px solid #d0d0d0;border-right:none;"></div>
<div style="left:1080px;top:423px;width:1px;height:19px;background:#d0d0d0;"></div>
<div style="left:981px;top:424px;width:97px;height:18px;overflow:hidden;"><div style="left:0;top:0;height:18px;line-height:19px;font-size:11px;color:#222;letter-spacing:-0.2px;">Style Sheet</div></div>
<div style="left:1085px;top:424px;width:128px;height:18px;overflow:hidden;"><div style="left:0;top:0;height:18px;line-height:19px;font-size:11px;color:#222;letter-spacing:-0.2px;">(Collection)</div></div>
<div style="left:963px;top:442px;width:251px;height:20px;border:1px solid #d0d0d0;border-right:none;"></div>
<div style="left:1080px;top:442px;width:1px;height:19px;background:#d0d0d0;"></div>
<div style="left:981px;top:443px;width:97px;height:18px;overflow:hidden;"><div style="left:0;top:0;height:18px;line-height:19px;font-size:11px;color:#222;letter-spacing:-0.2px;">Style Sheet's Path</div></div>
<div style="left:963px;top:461px;width:251px;height:20px;border:1px solid #d0d0d0;border-right:none;"></div>
<div style="left:1080px;top:461px;width:1px;height:19px;background:#d0d0d0;"></div>
<div style="left:981px;top:462px;width:97px;height:18px;overflow:hidden;"><div style="left:0;top:0;height:18px;line-height:19px;font-size:11px;color:#222;letter-spacing:-0.2px;">Text Alignment</div></div>
<div style="left:1085px;top:462px;width:128px;height:18px;overflow:hidden;"><div style="left:0;top:0;height:18px;line-height:19px;font-size:11px;color:#222;letter-spacing:-0.2px;">Top Left</div></div>
<div style="left:963px;top:480px;width:251px;height:20px;border:1px solid #d0d0d0;border-right:none;"></div>
<div style="left:1080px;top:480px;width:1px;height:19px;background:#d0d0d0;"></div>
<div style="left:981px;top:481px;width:97px;height:18px;overflow:hidden;"><div style="left:0;top:0;height:18px;line-height:19px;font-size:11px;color:#222;letter-spacing:-0.2px;">Watermark</div></div>
<svg style="left:970px;top:486px;" width="5" height="8" viewBox="0 0 5 8"><path d="M0 0V8L4.500 4Z" fill="#666"/></svg>
<div style="left:1085px;top:481px;width:128px;height:18px;overflow:hidden;"><div style="left:0;top:0;height:18px;line-height:19px;font-size:11px;color:#222;letter-spacing:-0.2px;">(none)</div></div>
<div style="left:948px;top:499px;width:266px;height:1px;background:#b9b9b9;"></div>
<div style="left:967px;top:500px;height:17px;line-height:17px;font-size:11.5px;font-weight:bold;color:#0072c6;">Behavior</div>
<svg style="left:1201px;top:506px;" width="7" height="4" viewBox="0 0 7 4"><path d="M0 4H7L3.500 0Z" fill="#555"/></svg>
<div style="left:963px;top:517px;width:251px;height:18px;border:1px solid #d0d0d0;border-right:none;"></div>
<div style="left:1080px;top:517px;width:1px;height:17px;background:#d0d0d0;"></div>
<div style="left:981px;top:518px;width:97px;height:16px;overflow:hidden;"><div style="left:0;top:0;height:16px;line-height:17px;font-size:11px;color:#222;letter-spacing:-0.2px;">Display Name</div></div>
<div style="left:1085px;top:518px;width:128px;height:16px;overflow:hidden;"><div style="left:0;top:0;height:16px;line-height:17px;font-size:11px;color:#222;letter-spacing:-0.090px;">DataMinerReport</div></div>
<div style="left:963px;top:534px;width:251px;height:18px;border:1px solid #d0d0d0;border-right:none;"></div>
<div style="left:1080px;top:534px;width:1px;height:17px;background:#d0d0d0;"></div>
<div style="left:981px;top:535px;width:97px;height:16px;overflow:hidden;"><div style="left:0;top:0;height:16px;line-height:17px;font-size:11px;color:#222;letter-spacing:-0.2px;">Export Options</div></div>
<svg style="left:970px;top:539px;" width="5" height="8" viewBox="0 0 5 8"><path d="M0 0V8L4.500 4Z" fill="#666"/></svg>
<div style="left:1085px;top:535px;width:128px;height:16px;overflow:hidden;"><div style="left:0;top:0;height:16px;line-height:17px;font-size:11px;color:#222;letter-spacing:-0.024px;">(Export Options)</div></div>
<div style="left:963px;top:551px;width:251px;height:20px;border:1px solid #d0d0d0;border-right:none;"></div>
<div style="left:1080px;top:551px;width:1px;height:19px;background:#d0d0d0;"></div>
<div style="left:981px;top:552px;width:97px;height:18px;overflow:hidden;"><div style="left:0;top:0;height:18px;line-height:19px;font-size:11px;color:#222;letter-spacing:-0.2px;">Horizontal Content Split</div></div>
<div style="left:1085px;top:552px;width:128px;height:18px;overflow:hidden;"><div style="left:0;top:0;height:18px;line-height:19px;font-size:11px;color:#222;letter-spacing:-0.2px;">Exact</div></div>
<div style="left:963px;top:570px;width:251px;height:20px;border:1px solid #d0d0d0;border-right:none;"></div>
<div style="left:1080px;top:570px;width:1px;height:19px;background:#d0d0d0;"></div>
<div style="left:981px;top:571px;width:97px;height:18px;overflow:hidden;"><div style="left:0;top:0;height:18px;line-height:19px;font-size:11px;color:#222;letter-spacing:-0.2px;">Measure Units</div></div>
<div style="left:1085px;top:571px;width:128px;height:18px;overflow:hidden;"><div style="left:0;top:0;height:18px;line-height:19px;font-size:11px;color:#222;letter-spacing:-0.025px;">Hundredths of an Inch</div></div>
<div style="left:963px;top:589px;width:251px;height:20px;border:1px solid #d0d0d0;border-right:none;"></div>
<div style="left:1080px;top:589px;width:1px;height:19px;background:#d0d0d0;"></div>
<div style="left:981px;top:590px;width:97px;height:18px;overflow:hidden;"><div style="left:0;top:0;height:18px;line-height:19px;font-size:11px;color:#222;letter-spacing:-0.2px;">Script Language</div></div>
<div style="left:1085px;top:590px;width:128px;height:18px;overflow:hidden;"><div style="left:0;top:0;height:18px;line-height:19px;font-size:11px;color:#222;letter-spacing:-0.2px;">C#</div></div>
<div style="left:963px;top:608px;width:251px;height:20px;border:1px solid #d0d0d0;border-right:none;"></div>
<div style="left:1080px;top:608px;width:1px;height:19px;background:#d0d0d0;"></div>
<div style="left:981px;top:609px;width:97px;height:18px;overflow:hidden;"><div style="left:0;top:0;height:18px;line-height:19px;font-size:11px;color:#222;letter-spacing:-0.2px;">Script References</div></div>
<svg style="left:970px;top:614px;" width="5" height="8" viewBox="0 0 5 8"><path d="M0 0V8L4.500 4Z" fill="#666"/></svg>
<div style="left:1085px;top:609px;width:128px;height:18px;overflow:hidden;"><div style="left:0;top:0;height:18px;line-height:19px;font-size:11px;color:#222;letter-spacing:-0.2px;">String[] Array</div></div>
<div style="left:963px;top:627px;width:251px;height:18px;border:1px solid #d0d0d0;border-right:none;"></div>
<div style="left:1080px;top:627px;width:1px;height:17px;background:#d0d0d0;"></div>
<div style="left:981px;top:628px;width:97px;height:16px;overflow:hidden;"><div style="left:0;top:0;height:16px;line-height:17px;font-size:11px;color:#222;letter-spacing:-0.2px;">Scripts</div></div>
<svg style="left:970px;top:632px;" width="5" height="8" viewBox="0 0 5 8"><path d="M0 0V8L4.500 4Z" fill="#666"/></svg>
<div style="left:1085px;top:628px;width:128px;height:16px;overflow:hidden;"><div style="left:0;top:0;height:16px;line-height:17px;font-size:11px;color:#222;letter-spacing:-0.2px;">(Report Scripts)</div></div>
<div style="left:963px;top:644px;width:251px;height:20px;border:1px solid #d0d0d0;border-right:none;"></div>
<div style="left:1080px;top:644px;width:1px;height:19px;background:#d0d0d0;"></div>
<div style="left:981px;top:645px;width:97px;height:18px;overflow:hidden;"><div style="left:0;top:0;height:18px;line-height:19px;font-size:11px;color:#222;letter-spacing:-0.2px;">Show Margin Lines in Preview</div></div>
<div style="left:1085px;top:645px;width:128px;height:18px;overflow:hidden;"><div style="left:0;top:0;height:18px;line-height:19px;font-size:11px;color:#222;letter-spacing:-0.2px;">Yes</div></div>
<div style="left:963px;top:663px;width:251px;height:20px;border:1px solid #d0d0d0;border-right:none;"></div>
<div style="left:1080px;top:663px;width:1px;height:19px;background:#d0d0d0;"></div>
<div style="left:981px;top:664px;width:97px;height:18px;overflow:hidden;"><div style="left:0;top:0;height:18px;line-height:19px;font-size:11px;color:#222;letter-spacing:-0.2px;">Vertical Content Split</div></div>
<div style="left:1085px;top:664px;width:128px;height:18px;overflow:hidden;"><div style="left:0;top:0;height:18px;line-height:19px;font-size:11px;color:#222;letter-spacing:-0.2px;">Exact</div></div>
<div style="left:963px;top:682px;width:251px;height:20px;border:1px solid #d0d0d0;border-right:none;"></div>
<div style="left:1080px;top:682px;width:1px;height:19px;background:#d0d0d0;"></div>
<div style="left:981px;top:683px;width:97px;height:18px;overflow:hidden;"><div style="left:0;top:0;height:18px;line-height:19px;font-size:11px;color:#222;letter-spacing:-0.2px;">Visible</div></div>
<div style="left:1085px;top:683px;width:128px;height:18px;overflow:hidden;"><div style="left:0;top:0;height:18px;line-height:19px;font-size:11px;color:#222;letter-spacing:-0.2px;">Yes</div></div>
<div style="left:948px;top:701px;width:266px;height:1px;background:#b9b9b9;"></div>
<div style="left:967px;top:702px;height:17px;line-height:17px;font-size:11.5px;font-weight:bold;color:#0072c6;">Data</div>
<svg style="left:1201px;top:708px;" width="7" height="4" viewBox="0 0 7 4"><path d="M0 4H7L3.500 0Z" fill="#555"/></svg>
<div style="left:963px;top:719px;width:251px;height:20px;border:1px solid #d0d0d0;border-right:none;"></div>
<div style="left:1080px;top:719px;width:1px;height:19px;background:#d0d0d0;"></div>
<div style="left:981px;top:720px;width:97px;height:18px;overflow:hidden;"><div style="left:0;top:0;height:18px;line-height:19px;font-size:11px;color:#222;letter-spacing:-0.2px;">Calculated Fields</div></div>
<div style="left:1085px;top:720px;height:19px;line-height:19px;font-size:11.5px;color:#222;font-weight:bold;">(Collection)</div>
<div style="left:963px;top:738px;width:251px;height:20px;border:1px solid #d0d0d0;border-right:none;"></div>
<div style="left:1080px;top:738px;width:1px;height:19px;background:#d0d0d0;"></div>
<div style="left:981px;top:739px;width:97px;height:18px;overflow:hidden;"><div style="left:0;top:0;height:18px;line-height:19px;font-size:11px;color:#222;letter-spacing:-0.2px;">Data Adapter</div></div>
<div style="left:1085px;top:739px;width:128px;height:18px;overflow:hidden;"><div style="left:0;top:0;height:18px;line-height:19px;font-size:11px;color:#222;letter-spacing:-0.2px;">(none)</div></div>
<div style="left:963px;top:757px;width:251px;height:20px;border:1px solid #d0d0d0;border-right:none;"></div>
<div style="left:1080px;top:757px;width:1px;height:19px;background:#d0d0d0;"></div>
<div style="left:981px;top:758px;width:97px;height:18px;overflow:hidden;"><div style="left:0;top:0;height:18px;line-height:19px;font-size:11px;color:#222;letter-spacing:-0.2px;">Data Member</div></div>
<div style="left:963px;top:776px;width:251px;height:20px;border:1px solid #d0d0d0;border-right:none;"></div>
<div style="left:1080px;top:776px;width:1px;height:19px;background:#d0d0d0;"></div>
<div style="left:981px;top:777px;width:97px;height:18px;overflow:hidden;"><div style="left:0;top:0;height:18px;line-height:19px;font-size:11px;color:#222;letter-spacing:-0.2px;">Data Source</div></div>
<div style="left:1085px;top:777px;width:128px;height:18px;overflow:hidden;"><div style="left:0;top:0;height:18px;line-height:19px;font-size:11px;color:#222;letter-spacing:-0.2px;">dataSet1</div></div>
<div style="left:963px;top:795px;width:251px;height:20px;border:1px solid #d0d0d0;border-right:none;"></div>
<div style="left:1080px;top:795px;width:1px;height:19px;background:#d0d0d0;"></div>
<div style="left:981px;top:796px;width:97px;height:18px;overflow:hidden;"><div style="left:0;top:0;height:18px;line-height:19px;font-size:11px;color:#222;letter-spacing:-0.2px;">Filter String</div></div>
<div style="left:1085px;top:796px;width:128px;height:18px;overflow:hidden;"><div style="left:0;top:0;height:18px;line-height:19px;font-size:11px;color:#222;letter-spacing:0.061px;">[Activity Finished] Is N...</div></div>
<div style="left:963px;top:814px;width:251px;height:9px;border:1px solid #d0d0d0;border-right:none;border-bottom:none;"></div>
<div style="left:1080px;top:814px;width:1px;height:9px;background:#d0d0d0;"></div>
<div style="left:981px;top:815px;width:97px;height:8px;overflow:hidden;"><div style="left:0;top:0;height:8px;line-height:19px;font-size:11px;color:#222;letter-spacing:-0.2px;">Tag</div></div>
<div style="left:1213px;top:200px;width:1px;height:623px;background:#d0d0d0;"></div>
<div style="left:1214px;top:200px;width:17px;height:623px;background:#f0f0f0;"></div>
<div style="left:1214px;top:218px;width:17px;height:300px;background:#c9c9c9;"></div>
<svg style="left:1218px;top:206px;" width="9" height="6" viewBox="0 0 9 6"><path d="M1 5L4.500 1.500L8 5" stroke="#555" stroke-width="1.600" fill="none"/></svg>
<svg style="left:1218px;top:809px;" width="9" height="6" viewBox="0 0 9 6"><path d="M1 1L4.5 4.5L8 1" stroke="#666" stroke-width="1.6" fill="none"/></svg>
<div style="left:1080px;top:829px;width:2px;height:2px;background:#555;"></div>
<div style="left:1084px;top:829px;width:2px;height:2px;background:#555;"></div>
<div style="left:1088px;top:829px;width:2px;height:2px;background:#555;"></div>
<div style="left:1092px;top:829px;width:2px;height:2px;background:#555;"></div>
<div style="left:1096px;top:829px;width:2px;height:2px;background:#555;"></div>
<div style="left:946px;top:836px;width:286px;height:50px;border:1px solid #c9c9c9;background:#fff;"></div>
</body></html>
